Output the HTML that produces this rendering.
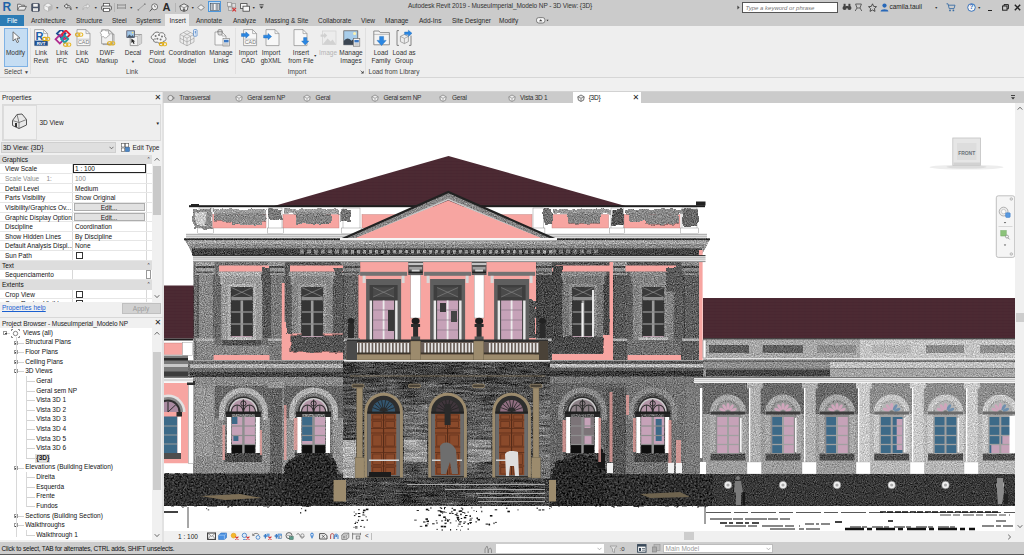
<!DOCTYPE html>
<html>
<head>
<meta charset="utf-8">
<title>Autodesk Revit 2019 - MuseuImperial_Modelo NP - 3D View: {3D}</title>
<style>
html,body{margin:0;padding:0;}
body{width:1024px;height:555px;overflow:hidden;background:#f0f0f0;font-family:"Liberation Sans","DejaVu Sans",sans-serif;font-size:6.5px;color:#222;position:relative;}
.abs{position:absolute;}
.t{position:absolute;white-space:nowrap;line-height:8px;}
.c{text-align:center;transform:translateX(-50%);}
#titlebar{left:0;top:0;width:1024px;height:26px;background:#cbcbcb;}
#ribbon{left:0;top:26px;width:1024px;height:51px;background:#eeeeee;border-bottom:1px solid #d6d6d6;}
#optbar{left:0;top:78px;width:1024px;height:13px;background:#f0f0f0;border-bottom:1px solid #d2d2d2;}
.tab{top:16.8px;color:#2a2a2a;}
.rl{top:48.5px;color:#333;line-height:8px;}
.pl{top:67.5px;color:#444;}
.sep{position:absolute;top:28px;width:1px;height:46px;background:#e0e0e0;}
#left{left:0;top:92px;width:163px;height:450px;background:#f0f0f0;}
.row{position:absolute;left:0;width:152px;height:9.63px;background:#fff;border-bottom:1px solid #e6e6e6;box-sizing:border-box;}
.row .k{position:absolute;left:5px;top:1px;line-height:8px;white-space:nowrap;color:#111;width:67px;overflow:hidden;}
.row .v{position:absolute;left:75px;top:1px;line-height:8px;white-space:nowrap;color:#111;}
.row .d{position:absolute;left:72px;top:0;width:1px;height:100%;background:#d8d8d8;}
.row .e{position:absolute;left:145.5px;top:0;width:1px;height:100%;background:#d8d8d8;}
.hdr{position:absolute;left:0;width:152px;height:9.63px;background:#dddddd;box-sizing:border-box;}
.hdr span{position:absolute;left:2px;top:1px;line-height:8px;color:#111;}
.hdr i{position:absolute;left:146.5px;top:0.5px;font-style:normal;font-size:5px;line-height:8px;color:#222;}
.btn{position:absolute;left:73.5px;top:0.5px;width:71px;height:7.6px;background:#e1e1e1;border:0.5px solid #adadad;box-sizing:border-box;text-align:center;line-height:7px;}
.chk{position:absolute;left:75.5px;top:1px;width:7px;height:7px;border:0.6px solid #333;background:#fff;box-sizing:border-box;}
.tree{position:absolute;white-space:nowrap;line-height:8px;color:#111;}
.ex{position:absolute;width:4px;height:4px;border:0.5px solid #999;background:#fff;box-sizing:border-box;}
.ex:after{content:"";position:absolute;left:0.5px;top:1.25px;width:2px;height:0.5px;background:#444;}
#vp{left:164px;top:103px;width:851px;height:428px;background:#fff;overflow:hidden;}
#tabs{left:163px;top:92px;width:861px;height:11px;background:#cbcbcb;}
.vt{position:absolute;top:94px;color:#333;white-space:nowrap;line-height:8px;letter-spacing:-0.25px;}
#status{left:0;top:541.5px;width:1024px;height:13.5px;background:#cdcdcd;}
#vcb{left:164px;top:531px;width:860px;height:10.5px;background:#f0f0f0;}
.ico{position:absolute;}
</style>
</head>
<body>
<!-- TITLE BAR + TABS -->
<div id="titlebar" class="abs"></div>
<div class="t" style="left:408px;top:1.7px;color:#333;letter-spacing:-0.1px;">Autodesk Revit 2019 - MuseuImperial_Modelo NP - 3D View: {3D}</div>
<div class="abs" style="left:0;top:15px;width:24px;height:11px;background:#2c7cb5;"></div>
<div class="t tab" style="left:7px;color:#fff;">File</div>
<div class="abs" style="left:165px;top:14px;width:24px;height:12px;background:#eeeeee;"></div>
<div class="t tab" style="left:31px;">Architecture</div>
<div class="t tab" style="left:76px;">Structure</div>
<div class="t tab" style="left:112px;">Steel</div>
<div class="t tab" style="left:136px;">Systems</div>
<div class="t tab" style="left:169.5px;">Insert</div>
<div class="t tab" style="left:196px;">Annotate</div>
<div class="t tab" style="left:233px;">Analyze</div>
<div class="t tab" style="left:265px;">Massing &amp; Site</div>
<div class="t tab" style="left:318px;">Collaborate</div>
<div class="t tab" style="left:361px;">View</div>
<div class="t tab" style="left:385px;">Manage</div>
<div class="t tab" style="left:419px;">Add-Ins</div>
<div class="t tab" style="left:452px;">Site Designer</div>
<div class="t tab" style="left:499px;">Modify</div>
<!-- RIBBON -->
<div id="ribbon" class="abs"></div>
<div id="optbar" class="abs"></div>
<div class="abs" style="left:4px;top:28px;width:22px;height:37px;background:#c5ddf3;border:1px solid #7fb2e5;box-sizing:content-box;"></div>
<div class="t rl c" style="left:15.5px;">Modify</div>
<div class="t rl c" style="left:41px;">Link<br>Revit</div>
<div class="t rl c" style="left:62px;">Link<br>IFC</div>
<div class="t rl c" style="left:82px;">Link<br>CAD</div>
<div class="t rl c" style="left:107px;">DWF<br>Markup</div>
<div class="t rl c" style="left:133px;">Decal<br><span style="font-size:4px">&#9660;</span></div>
<div class="t rl c" style="left:157px;">Point<br>Cloud</div>
<div class="t rl c" style="left:187px;">Coordination<br>Model</div>
<div class="t rl c" style="left:221px;">Manage<br>Links</div>
<div class="t rl c" style="left:248px;">Import<br>CAD</div>
<div class="t rl c" style="left:271px;">Import<br>gbXML</div>
<div class="t rl c" style="left:301px;">Insert<br>from File</div>
<div class="t rl c" style="left:328px;color:#b4b4b4;">Image</div>
<div class="t rl c" style="left:351px;">Manage<br>Images</div>
<div class="t rl c" style="left:381px;">Load<br>Family</div>
<div class="t rl c" style="left:404px;">Load as<br>Group</div>
<div class="t pl" style="left:4px;">Select <span style="font-size:5px">&#9660;</span></div>
<div class="t pl c" style="left:132px;">Link</div>
<div class="t pl c" style="left:297px;">Import</div>
<div class="t pl c" style="left:394px;">Load from Library</div>
<div class="sep" style="left:30px;"></div>
<div class="sep" style="left:235px;"></div>
<div class="sep" style="left:365px;"></div>

<div class="t" style="left:2.5px;top:1px;font-size:12px;line-height:12px;font-weight:bold;color:#1f63a8;">R</div>
<svg class="ico" style="left:17.0px;top:3.0px" width="10" height="8" viewBox="0 0 10 8"><path d="M0.6 7.2 V1.2 H3.4 L4.2 2.2 H7.4 V3.4" fill="#f4f4f4" stroke="#555" stroke-width="0.8"/><path d="M0.6 7.2 L2.4 3.4 H9.4 L7.6 7.2 Z" fill="#e8e8e8" stroke="#555" stroke-width="0.8"/></svg>
<svg class="ico" style="left:31.0px;top:2.5px" width="9" height="9" viewBox="0 0 9 9"><rect x="0.6" y="0.6" width="7.8" height="7.8" rx="0.8" fill="#4a5568" stroke="#3a4252" stroke-width="0.6"/><rect x="2.2" y="0.9" width="4.6" height="2.8" fill="#f0f0f0"/><rect x="2" y="5.2" width="5" height="3" fill="#e4e4e4"/></svg>
<svg class="ico" style="left:43.0px;top:2.0px" width="10" height="10" viewBox="0 0 10 10"><path d="M1 3.2 L5 1 L9 3.2 V7.4 L5 9.4 L1 7.4 Z" fill="#f2f2f2" stroke="#aaa" stroke-width="0.7"/><path d="M5 5.2 L9 3.2 V7.4 L5 9.4 Z" fill="#b8b8b8"/><path d="M1 3.2 L5 5.2 L9 3.2" fill="none" stroke="#aaa" stroke-width="0.6"/></svg>
<div class="t" style="left:55.5px;top:6.2px;font-size:3.5px;line-height:4px;color:#333;">&#9660;</div>
<svg class="ico" style="left:62.5px;top:3.0px" width="9" height="8" viewBox="0 0 9 8"><path d="M1 3 L4 0.8 V2.2 C7 2.2 8.4 4 8 6.8 C7.4 5 6.4 4 4 4 V5.4 Z" fill="#f0f0f0" stroke="#444" stroke-width="0.8" stroke-linejoin="round"/></svg>
<div class="t" style="left:75.0px;top:6.2px;font-size:3.5px;line-height:4px;color:#333;">&#9660;</div>
<svg class="ico" style="left:81.5px;top:3.0px" width="9" height="8" viewBox="0 0 9 8"><path d="M8 3 L5 0.8 V2.2 C2 2.2 0.6 4 1 6.8 C1.6 5 2.6 4 5 4 V5.4 Z" fill="#ececec" stroke="#b0b0b0" stroke-width="0.8" stroke-linejoin="round"/></svg>
<div class="t" style="left:94.0px;top:6.2px;font-size:3.5px;line-height:4px;color:#333;">&#9660;</div>
<svg class="ico" style="left:100.5px;top:2.5px" width="11" height="9" viewBox="0 0 11 9"><rect x="2.6" y="0.6" width="5.8" height="3" fill="#fff" stroke="#444" stroke-width="0.7"/><rect x="0.6" y="3" width="9.8" height="4" rx="1" fill="#e0e0e0" stroke="#444" stroke-width="0.8"/><rect x="2.6" y="5.6" width="5.8" height="2.8" fill="#fff" stroke="#444" stroke-width="0.7"/></svg>
<div class="abs" style="left:114px;top:2.5px;width:1px;height:9px;background:#b4b4b4;"></div>
<svg class="ico" style="left:117.0px;top:4.0px" width="9" height="5" viewBox="0 0 9 5"><path d="M0.5 1 H8.5 M0.5 4 H8.5" stroke="#8a8a8a" stroke-width="1"/><path d="M0.5 0 V5 M8.5 0 V5" stroke="#777" stroke-width="0.6"/></svg>
<div class="t" style="left:129.5px;top:6.2px;font-size:3.5px;line-height:4px;color:#333;">&#9660;</div>
<svg class="ico" style="left:136.5px;top:3.0px" width="9" height="8" viewBox="0 0 9 8"><path d="M1 7 L8 1" stroke="#9a9a9a" stroke-width="0.9"/><circle cx="1.3" cy="6.8" r="0.9" fill="#888"/><circle cx="7.8" cy="1.2" r="0.9" fill="#888"/></svg>
<svg class="ico" style="left:149.0px;top:2.5px" width="10" height="9" viewBox="0 0 10 9"><circle cx="5.6" cy="3.8" r="3" fill="#f0f0f0" stroke="#555" stroke-width="0.8"/><path d="M5.6 2 V3.8 H7" fill="none" stroke="#555" stroke-width="0.6"/><path d="M0.8 8.4 L3.4 5.4" stroke="#555" stroke-width="1"/></svg>
<div class="t" style="left:162.5px;top:1.5px;font-size:11px;line-height:11px;font-weight:bold;color:#2b2b2b;">A</div>
<div class="abs" style="left:175px;top:2.5px;width:1px;height:9px;background:#b4b4b4;"></div>
<svg class="ico" style="left:178.5px;top:2.5px" width="10" height="9" viewBox="0 0 10 9"><path d="M0.8 3 L5 0.8 L9.2 3 L8.2 7.2 L5 8.4 L1.8 7.2 Z" fill="#f0f0f0" stroke="#444" stroke-width="0.8"/><path d="M0.8 3 L5 4.6 L9.2 3 M5 4.6 V8.4" fill="none" stroke="#555" stroke-width="0.6"/><rect x="3.8" y="5.6" width="2.4" height="2.6" fill="#666"/></svg>
<div class="t" style="left:191.0px;top:6.2px;font-size:3.5px;line-height:4px;color:#333;">&#9660;</div>
<svg class="ico" style="left:196.5px;top:3.5px" width="8" height="7" viewBox="0 0 8 7"><path d="M0.6 3.5 L4 0.7 L7.4 3.5 L4 6.3 Z" fill="#f0f0f0" stroke="#666" stroke-width="0.7"/></svg>
<div class="abs" style="left:208px;top:1px;width:13px;height:11px;background:#c3dcf2;border:0.8px solid #4e97dc;box-sizing:border-box;"></div>
<svg class="ico" style="left:209.5px;top:2.5px" width="10" height="8" viewBox="0 0 10 8"><rect x="0.4" y="0.4" width="9.2" height="7.2" fill="#f6f6f6" stroke="#345" stroke-width="0.6"/><path d="M1.4 2 H4 M1.4 4 H4 M1.4 6 H4 M5.6 2 H8.6 M5.6 4 H8.6 M5.6 6 H8.6" stroke="#345" stroke-width="0.9"/></svg>
<svg class="ico" style="left:227.0px;top:2.0px" width="10" height="10" viewBox="0 0 10 10"><rect x="0.6" y="0.6" width="3.6" height="3.6" fill="#eee" stroke="#888" stroke-width="0.6"/><rect x="5" y="1.6" width="3.6" height="3.6" fill="#ddd" stroke="#888" stroke-width="0.6"/><rect x="1.4" y="5" width="3.6" height="3.6" fill="#ddd" stroke="#888" stroke-width="0.6"/><path d="M5.4 5.8 L9 9.4 M9 5.8 L5.4 9.4" stroke="#d32f2f" stroke-width="1.1"/></svg>
<svg class="ico" style="left:240.0px;top:2.5px" width="10" height="9" viewBox="0 0 10 9"><rect x="0.6" y="0.6" width="6.4" height="5" fill="#f4f4f4" stroke="#444" stroke-width="0.8"/><rect x="3" y="3.2" width="6.4" height="5" fill="#f4f4f4" stroke="#444" stroke-width="0.8"/></svg>
<div class="t" style="left:252.0px;top:6.2px;font-size:3.5px;line-height:4px;color:#333;">&#9660;</div>
<svg class="ico" style="left:258.5px;top:4.0px" width="5" height="6" viewBox="0 0 5 6"><path d="M0.4 0.8 H4.6" stroke="#333" stroke-width="0.9"/><path d="M0.6 2.6 H4.4 L2.5 4.8 Z" fill="#333"/></svg>
<svg class="ico" style="left:536.0px;top:16.5px" width="13" height="7" viewBox="0 0 13 7"><rect x="0.5" y="0.6" width="8.4" height="5.4" rx="2.2" fill="#f4f4f4" stroke="#555" stroke-width="0.7"/><path d="M3 4.2 L4.7 2.2 L6.4 4.2 Z" fill="#444"/><path d="M10.4 2.8 H12.6 L11.5 4.2 Z" fill="#333"/></svg>
<svg class="ico" style="left:736.5px;top:5.0px" width="3" height="5" viewBox="0 0 3 5"><path d="M0.4 0.4 L2.6 2.5 L0.4 4.6 Z" fill="#444"/></svg>
<div class="abs" style="left:742px;top:2px;width:95.5px;height:10.5px;background:#fff;border:0.8px solid #555;box-sizing:border-box;"></div>
<div class="t" style="left:745.5px;top:3.5px;font-size:6px;font-style:italic;color:#777;">Type a keyword or phrase</div>
<svg class="ico" style="left:842.0px;top:3.0px" width="10" height="8" viewBox="0 0 10 8"><circle cx="2.6" cy="5" r="2.1" fill="#444"/><circle cx="7.4" cy="5" r="2.1" fill="#444"/><rect x="1.6" y="0.8" width="2" height="3.6" fill="#444"/><rect x="6.4" y="0.8" width="2" height="3.6" fill="#444"/><rect x="4" y="3" width="2" height="2" fill="#444"/></svg>
<svg class="ico" style="left:854.0px;top:2.5px" width="9" height="9" viewBox="0 0 9 9"><path d="M1.2 8 L3 5 L1.6 1 H7.4 L6 5 L7.8 8" fill="none" stroke="#444" stroke-width="0.8"/><path d="M3 5 H6" stroke="#444" stroke-width="0.7"/></svg>
<svg class="ico" style="left:867.5px;top:2.5px" width="9" height="9" viewBox="0 0 9 9"><path d="M4.5 0.8 L5.7 3.4 L8.5 3.7 L6.4 5.6 L7 8.4 L4.5 7 L2 8.4 L2.6 5.6 L0.5 3.7 L3.3 3.4 Z" fill="none" stroke="#333" stroke-width="0.8"/></svg>
<svg class="ico" style="left:879.5px;top:2.5px" width="9" height="9" viewBox="0 0 9 9"><circle cx="4.5" cy="2.6" r="2.1" fill="#2868b8"/><path d="M0.6 8.6 C0.6 5.4 8.4 5.4 8.4 8.6 Z" fill="#2868b8"/></svg>
<div class="t" style="left:889.5px;top:3px;color:#222;">camila.tauil</div>
<div class="t" style="left:934.5px;top:5.5px;font-size:3.5px;line-height:4px;color:#333;">&#9660;</div>
<svg class="ico" style="left:945.5px;top:3.0px" width="10" height="9" viewBox="0 0 10 9"><path d="M0.5 0.8 H2 L3.2 5.6 H8 L9 2.2 H2.4" fill="none" stroke="#3b6ea5" stroke-width="0.9"/><circle cx="4" cy="7.4" r="0.9" fill="#3b6ea5"/><circle cx="7.4" cy="7.4" r="0.9" fill="#3b6ea5"/></svg>
<svg class="ico" style="left:966.5px;top:2.5px" width="9" height="9" viewBox="0 0 9 9"><circle cx="4.5" cy="4.5" r="3.8" fill="#f4f4f4" stroke="#2868b8" stroke-width="0.9"/></svg>
<div class="t" style="left:969.4px;top:3px;font-size:6.5px;font-weight:bold;color:#2868b8;">?</div>
<div class="t" style="left:977.5px;top:5.5px;font-size:3.5px;line-height:4px;color:#333;">&#9660;</div>
<div class="abs" style="left:988px;top:9.5px;width:4px;height:1.3px;background:#222;"></div>
<svg class="ico" style="left:1002.0px;top:3.5px" width="7" height="7" viewBox="0 0 7 7"><rect x="0.6" y="2" width="4.4" height="4.2" fill="none" stroke="#222" stroke-width="1"/><path d="M2 2 V0.6 H6.4 V4.8 H5" fill="none" stroke="#222" stroke-width="1"/></svg>
<svg class="ico" style="left:1014.0px;top:3.5px" width="7" height="7" viewBox="0 0 7 7"><path d="M0.8 0.8 L6.2 6.2 M6.2 0.8 L0.8 6.2" stroke="#222" stroke-width="1.4"/></svg>
<svg class="ico" style="left:11.5px;top:31.0px" width="9" height="13" viewBox="0 0 9 13"><path d="M1 0.8 V10 L3.4 7.8 L5 11.6 L6.6 10.9 L5 7.2 H8 Z" fill="#fafafa" stroke="#555" stroke-width="0.8" stroke-linejoin="round"/></svg>
<svg class="ico" style="left:33.5px;top:29.0px" width="18" height="18" viewBox="0 0 18 18"><path d="M0.6 0.6 H9.6 L13.6 4.6 V16.6 H0.6 Z" fill="#f7f7f7" stroke="#8a8a8a" stroke-width="0.7"/><path d="M9.6 0.6 V4.6 H13.6" fill="none" stroke="#8a8a8a" stroke-width="0.6"/><rect x="0.6" y="11.6" width="13" height="5" fill="#1d4f91"/><text x="7.1" y="15.8" font-size="4.4" font-family="Liberation Sans,sans-serif" font-weight="bold" fill="#fff" text-anchor="middle">RVT</text><text x="5.4" y="10.6" font-size="11" font-family="Liberation Sans,sans-serif" font-weight="bold" fill="#1d5fa8" text-anchor="middle">R</text><g transform="translate(8.6 8.4)"><rect x="0" y="0" width="4.2" height="3.2" rx="1.5" fill="none" stroke="#d9a514" stroke-width="1.1"/><rect x="3" y="0" width="4.2" height="3.2" rx="1.5" fill="none" stroke="#e8b92a" stroke-width="1.1"/></g></svg>
<svg class="ico" style="left:53.5px;top:29.5px" width="18" height="17" viewBox="0 0 18 17"><g fill="none" stroke-width="1.8"><rect x="4.2" y="0.6" width="6" height="6" transform="rotate(45 7.2 3.6)" stroke="#1d4f91"/><rect x="8.8" y="1.6" width="6" height="6" transform="rotate(45 11.8 4.6)" stroke="#e0233a"/><rect x="2.8" y="6.2" width="6" height="6" transform="rotate(45 5.8 9.2)" stroke="#b02a8f"/><rect x="8.2" y="6.6" width="5" height="5" transform="rotate(45 10.7 9.1)" stroke="#1f9aa8"/></g><g transform="translate(9.6 13)"><rect x="0" y="0" width="4.2" height="3.2" rx="1.5" fill="none" stroke="#d9a514" stroke-width="1.1"/><rect x="3" y="0" width="4.2" height="3.2" rx="1.5" fill="none" stroke="#e8b92a" stroke-width="1.1"/></g></svg>
<svg class="ico" style="left:74.5px;top:29.0px" width="17" height="18" viewBox="0 0 17 18"><path d="M2 0.6 H11 L15 4.6 V16.6 H2 Z" fill="#f7f7f7" stroke="#8a8a8a" stroke-width="0.7"/><path d="M11 0.6 V4.6 H15" fill="none" stroke="#8a8a8a" stroke-width="0.6"/><text x="8.6" y="15" font-size="5.4" font-family="Liberation Sans,sans-serif" fill="#777" text-anchor="middle">CAD</text><path d="M2.8 10.2 H14.4" stroke="#999" stroke-width="0.5"/><g transform="translate(0.6 4)"><rect x="0" y="0" width="4.2" height="3.2" rx="1.5" fill="none" stroke="#d9a514" stroke-width="1.1"/><rect x="3" y="0" width="4.2" height="3.2" rx="1.5" fill="none" stroke="#e8b92a" stroke-width="1.1"/></g></svg>
<svg class="ico" style="left:98.5px;top:29.0px" width="18" height="18" viewBox="0 0 18 18"><path d="M4 1.6 H11 L15 5.6 V15.6 H4 Z" fill="#e6e6e6" stroke="#8a8a8a" stroke-width="0.7"/><path d="M11 1.6 V5.6 H15" fill="none" stroke="#8a8a8a" stroke-width="0.6"/><path d="M2.6 0.8 H9.6 L13.6 4.8 V14.8 H2.6 Z" fill="#f0f0f0" stroke="#8a8a8a" stroke-width="0.7"/><path d="M9.6 0.8 V4.8 H13.6" fill="none" stroke="#8a8a8a" stroke-width="0.6"/><path d="M2.6 5.2 C0.8 5 0.8 2.2 3 2.4 C3.4 0.4 6.4 0.4 6.8 2 C8.6 0.8 10.4 2.6 9.4 4.2 C11 5 10.4 7.4 8.6 7.2 C8.2 9.4 5 9.4 4.6 7.6 C2.6 8.2 1.2 6.4 2.6 5.2 Z" fill="#fff" stroke="#999" stroke-width="0.8"/><g transform="translate(8.6 12.8)"><rect x="0" y="0" width="4.2" height="3.2" rx="1.5" fill="none" stroke="#d9a514" stroke-width="1.1"/><rect x="3" y="0" width="4.2" height="3.2" rx="1.5" fill="none" stroke="#e8b92a" stroke-width="1.1"/></g></svg>
<svg class="ico" style="left:125.5px;top:29.5px" width="17" height="17" viewBox="0 0 17 17"><path d="M4.2 6.4 L8.4 4.6 H15.6 V13.2 L11.6 15.6 H4.2 Z" fill="#f2f2f2" stroke="#777" stroke-width="0.7"/><path d="M4.2 6.4 H11.6 V15.6 M11.6 6.4 L15.6 4.6" fill="none" stroke="#888" stroke-width="0.6"/><path d="M11.6 6.4 L15.6 4.6 V13.2 L11.6 15.6 Z" fill="#d4d4d4"/><rect x="0.8" y="0.8" width="7.6" height="6.8" fill="#9fc4e6" stroke="#445" stroke-width="0.7"/><path d="M0.8 7.6 L3.4 4.4 L5.4 6.2 L6.6 5 L8.4 7.6 Z" fill="#4a5a6a"/><circle cx="6.6" cy="2.6" r="0.9" fill="#f4e07a"/><path d="M5.4 8.6 V13 L6.6 12 L7.6 14 L8.6 13.6 L7.6 11.6 H9.2 Z" fill="#222"/></svg>
<svg class="ico" style="left:149.5px;top:30.5px" width="18" height="16" viewBox="0 0 18 16"><path d="M3.6 8.6 C0.6 8.4 0.4 4.4 3.4 3.8 C3.8 1 8 0.2 9.6 2.2 C12.4 0.6 15.8 3 14.6 5.6 C17 6.8 16.2 10.4 13.4 10.2 C12.6 12.8 8.4 13 7.4 11 C5.4 12 3 10.8 3.6 8.6 Z" fill="#f4f4f4" stroke="#555" stroke-width="0.8"/><g fill="#777"><circle cx="5.6" cy="5" r="1"/><circle cx="9" cy="4" r="1"/><circle cx="12" cy="5.6" r="1"/><circle cx="7.4" cy="7.8" r="1"/><circle cx="10.6" cy="8.4" r="1"/><circle cx="5" cy="8" r="0.8"/></g><g transform="translate(9.4 11.6)"><rect x="0" y="0" width="4.2" height="3.2" rx="1.5" fill="none" stroke="#d9a514" stroke-width="1.1"/><rect x="3" y="0" width="4.2" height="3.2" rx="1.5" fill="none" stroke="#e8b92a" stroke-width="1.1"/></g></svg>
<svg class="ico" style="left:178.5px;top:29.0px" width="19" height="18" viewBox="0 0 19 18"><g fill="#ececec" stroke="#9a9a9a" stroke-width="0.6"><path d="M1 5.4 L8 1.6 L15 5.4 V13 L8 16.8 L1 13 Z"/><path d="M1 5.4 L8 9.2 L15 5.4 M8 9.2 V16.8 M1 9.2 L8 13 L15 9.2 M4.5 3.5 L11.5 7.3 V15 M11.5 3.5 L4.5 7.3 V15" fill="none"/></g><rect x="14.6" y="0.6" width="3.4" height="6.6" rx="0.8" fill="#fff" stroke="#3b78c4" stroke-width="0.7"/><path d="M16.3 1.8 V4.6 M16.3 5.6 V6.2" stroke="#3b78c4" stroke-width="0.9"/></svg>
<svg class="ico" style="left:212.5px;top:29.0px" width="18" height="18" viewBox="0 0 18 18"><path d="M2 3 H9 L13 7 V16 H2 Z" fill="#f7f7f7" stroke="#8a8a8a" stroke-width="0.7"/><path d="M9 3 V7 H13" fill="none" stroke="#8a8a8a" stroke-width="0.6"/><rect x="5" y="0.6" width="4" height="5.4" rx="1.2" fill="#d8d8d8" stroke="#777" stroke-width="0.7"/><path d="M4 2.6 H10" stroke="#777" stroke-width="0.6"/><rect x="10" y="9.4" width="6.6" height="7.6" fill="#f4f4f4" stroke="#777" stroke-width="0.6"/><rect x="11" y="10.8" width="4.6" height="2.6" fill="#3b78c4"/><path d="M11 14.8 H15.6 M11 16 H15.6" stroke="#888" stroke-width="0.5"/></svg>
<svg class="ico" style="left:240.5px;top:29.0px" width="17" height="18" viewBox="0 0 17 18"><path d="M2.6 0.6 H11.6 L15.6 4.6 V16.6 H2.6 Z" fill="#f7f7f7" stroke="#8a8a8a" stroke-width="0.7"/><path d="M11.6 0.6 V4.6 H15.6" fill="none" stroke="#8a8a8a" stroke-width="0.6"/><text x="9.4" y="15" font-size="5.4" font-family="Liberation Sans,sans-serif" fill="#777" text-anchor="middle">CAD</text><path d="M3.4 10.2 H15" stroke="#999" stroke-width="0.5"/><path d="M0.4 4.6 h4.4 v-1.8 l3.6 3.2 l-3.6 3.2 v-1.8 h-4.4 Z" fill="#2a86e2" stroke="#1a64b4" stroke-width="0.4"/></svg>
<svg class="ico" style="left:262.5px;top:29.0px" width="17" height="18" viewBox="0 0 17 18"><path d="M3 0.6 H12 L16 4.6 V16.6 H3 Z" fill="#f7f7f7" stroke="#8a8a8a" stroke-width="0.7"/><path d="M12 0.6 V4.6 H16" fill="none" stroke="#8a8a8a" stroke-width="0.6"/><path d="M0.6 6.2 h4.4 v-1.8 l3.6 3.2 l-3.6 3.2 v-1.8 h-4.4 Z" fill="#2a86e2" stroke="#1a64b4" stroke-width="0.4"/></svg>
<svg class="ico" style="left:292.5px;top:29.0px" width="18" height="18" viewBox="0 0 18 18"><path d="M1 0.6 H10 L14 4.6 V16.6 H1 Z" fill="#f7f7f7" stroke="#8a8a8a" stroke-width="0.7"/><path d="M10 0.6 V4.6 H14" fill="none" stroke="#8a8a8a" stroke-width="0.6"/><path d="M10.6 8.6 h3.2 v3.4 h2 l-3.6 4 l-3.6 -4 h2 Z" fill="#2a86e2" stroke="#1a64b4" stroke-width="0.4"/></svg>
<div class="t" style="left:313.5px;top:53.5px;font-size:3.5px;line-height:4px;color:#333;">&#9660;</div>
<svg class="ico" style="left:320.0px;top:30.0px" width="17" height="16" viewBox="0 0 17 16"><rect x="2.6" y="1" width="13.4" height="13.6" fill="#ececec" stroke="#d0d0d0" stroke-width="0.7"/><path d="M2.6 14.6 L7.6 8.4 L10.6 11.4 L12.6 9.6 L16 14.6 Z" fill="#d2d2d2"/><path d="M0.6 4.4 h3.6 v-1.6 l3 2.8 l-3 2.8 v-1.6 h-3.6 Z" fill="#d0d0d0"/></svg>
<svg class="ico" style="left:343.0px;top:30.0px" width="18" height="17" viewBox="0 0 18 17"><rect x="0.8" y="0.8" width="14" height="14" fill="#a8cdea" stroke="#555" stroke-width="0.7"/><path d="M0.8 14.8 V11 C3 7.6 6 7.6 8.4 10.8 L9.6 9.6 L14.8 14.8 Z" fill="#3c4652"/><circle cx="11.6" cy="3.6" r="1.5" fill="#fdf3b0"/><rect x="10.4" y="8.6" width="6.4" height="7.6" fill="#f4f4f4" stroke="#666" stroke-width="0.6"/><rect x="11.4" y="10" width="4.4" height="2.4" fill="#3b78c4"/><path d="M11.4 13.8 H15.8 M11.4 15 H15.8" stroke="#888" stroke-width="0.5"/></svg>
<svg class="ico" style="left:372.5px;top:30.0px" width="18" height="17" viewBox="0 0 18 17"><path d="M0.8 14.8 V1 H6 L7.2 2.6 H16.4 V14.8 Z" fill="#f4f4f4" stroke="#777" stroke-width="0.8"/><path d="M0.8 4.4 H16.4" stroke="#999" stroke-width="0.6"/><path d="M6.6 6.4 h4 v4 h2.6 l-4.6 5.2 l-4.6 -5.2 h2.6 Z" fill="#2a86e2" stroke="#1a64b4" stroke-width="0.4"/></svg>
<svg class="ico" style="left:395.5px;top:29.0px" width="18" height="18" viewBox="0 0 18 18"><path d="M3 1.6 H1 V16.4 H3 M13 16.4 H15 V6.6" fill="none" stroke="#777" stroke-width="0.9"/><path d="M4.4 7.4 L8.4 5.4 L12.4 7.4 V12.6 L8.4 14.6 L4.4 12.6 Z" fill="#ececec" stroke="#888" stroke-width="0.7"/><path d="M4.4 7.4 L8.4 9.4 L12.4 7.4 M8.4 9.4 V14.6" fill="none" stroke="#888" stroke-width="0.6"/><path d="M8.6 3 h3.8 v-1.8 l3.6 3.1 l-3.6 3.1 v-1.8 h-3.8 Z" fill="#2a86e2" stroke="#1a64b4" stroke-width="0.4"/></svg>
<svg class="ico" style="left:360.0px;top:70.0px" width="4" height="4" viewBox="0 0 4 4"><path d="M3.6 0.8 V3.6 H0.8 Z" fill="#444"/><path d="M0.6 0.6 L2.4 2.4" stroke="#444" stroke-width="0.7"/></svg>
<div id="left" class="abs"></div>
<div class="abs" style="left:162px;top:92px;width:2px;height:450px;background:#e2e2e2;"></div>
<div class="t" style="left:2px;top:94px;color:#222;">Properties</div>
<div class="t" style="left:154.5px;top:93.5px;font-size:8px;color:#222;">&#10005;</div>
<div class="abs" style="left:1.5px;top:103.5px;width:159.5px;height:37px;background:#eeeeee;border:0.5px solid #dadada;box-sizing:border-box;"></div>
<div class="abs" style="left:2.5px;top:104.5px;width:34.5px;height:35px;background:#f0f0f0;border:0.5px solid #dcdcdc;box-sizing:border-box;"></div>
<svg class="ico" style="left:11px;top:113px" width="17" height="17" viewBox="0 0 17 17"><path d="M1.5 7.5 L6 1.5 L11 1 L15.5 6.5 L15.5 12 L8 15.5 L1.5 12.5 Z" fill="#e8e8e8" stroke="#555" stroke-width="1"/><path d="M1.5 7.5 L8 9.5 L15.5 6.5 M8 9.5 L8 15.5 M6 1.5 L8 9.5" fill="none" stroke="#666" stroke-width="0.8"/><rect x="4" y="10" width="2" height="4" fill="#333"/></svg>
<div class="t" style="left:39.5px;top:119px;color:#222;">3D View</div>
<div class="t" style="left:155.5px;top:119.5px;font-size:4.5px;color:#222;">&#9660;</div>
<div class="abs" style="left:1px;top:142px;width:115px;height:11px;background:#dfdfdf;border:0.5px solid #cfcfcf;box-sizing:border-box;"></div>
<div class="t" style="left:3px;top:144px;color:#111;">3D View: {3D}</div>
<svg class="ico" style="left:109px;top:146px" width="5" height="4" viewBox="0 0 5 4"><path d="M0.5 0.8 L2.5 2.8 L4.5 0.8" fill="none" stroke="#444" stroke-width="0.7"/></svg>
<svg class="ico" style="left:121px;top:142.5px" width="9" height="9" viewBox="0 0 9 9"><rect x="0.5" y="0.5" width="3.2" height="3.5" fill="#fff" stroke="#555" stroke-width="0.6"/><rect x="4.5" y="0.5" width="3.2" height="3.5" fill="#fff" stroke="#555" stroke-width="0.6"/><rect x="0.5" y="5" width="3.2" height="3.5" fill="#fff" stroke="#555" stroke-width="0.6"/><rect x="4.5" y="4.5" width="3.8" height="4" fill="#4a86c6" stroke="#2b5c94" stroke-width="0.6"/></svg>
<div class="t" style="left:132.5px;top:143.5px;color:#222;">Edit Type</div>
<div class="abs" style="left:0;top:154.80px;width:163px;height:146.80px;overflow:hidden;">
<div class="hdr" style="top:0.00px"><span>Graphics</span><i>&#8963;</i></div>
<div class="row" style="top:9.63px"><div class="k">View Scale</div><div class="d"></div><div class="e"></div><div class="abs" style="left:73px;top:0;width:72.5px;height:9px;border:0.8px solid #222;box-sizing:border-box;background:#fff;"></div><div class="v">1 : 100</div></div>
<div class="row" style="top:19.26px"><div class="k" style="color:#8a8a8a">Scale Value&nbsp;&nbsp;&nbsp;&nbsp;1:</div><div class="d"></div><div class="e"></div><div class="v" style="color:#8a8a8a">100</div></div>
<div class="row" style="top:28.89px"><div class="k">Detail Level</div><div class="d"></div><div class="e"></div><div class="v">Medium</div></div>
<div class="row" style="top:38.52px"><div class="k">Parts Visibility</div><div class="d"></div><div class="e"></div><div class="v">Show Original</div></div>
<div class="row" style="top:48.15px"><div class="k">Visibility/Graphics Ov...</div><div class="d"></div><div class="e"></div><div class="btn">Edit...</div></div>
<div class="row" style="top:57.78px"><div class="k">Graphic Display Options</div><div class="d"></div><div class="e"></div><div class="btn">Edit...</div></div>
<div class="row" style="top:67.41px"><div class="k">Discipline</div><div class="d"></div><div class="e"></div><div class="v">Coordination</div></div>
<div class="row" style="top:77.04px"><div class="k">Show Hidden Lines</div><div class="d"></div><div class="e"></div><div class="v">By Discipline</div></div>
<div class="row" style="top:86.67px"><div class="k">Default Analysis Displ...</div><div class="d"></div><div class="e"></div><div class="v">None</div></div>
<div class="row" style="top:96.30px"><div class="k">Sun Path</div><div class="d"></div><div class="e"></div><div class="chk"></div></div>
<div class="hdr" style="top:105.93px"><span>Text</span><i>&#8963;</i></div>
<div class="row" style="top:115.56px"><div class="k">Sequenciamento</div><div class="d"></div><div class="e"></div><div class="v"></div></div>
<div class="hdr" style="top:125.19px"><span>Extents</span><i>&#8963;</i></div>
<div class="row" style="top:134.82px"><div class="k">Crop View</div><div class="d"></div><div class="e"></div><div class="chk"></div></div>
<div class="row" style="top:144.45px"><div class="k">Crop Region Visible</div><div class="d"></div><div class="e"></div><div class="chk"></div></div>
</div>
<div class="abs" style="left:152px;top:154.8px;width:9.5px;height:147px;background:#f0f0f0;"></div>
<div class="abs" style="left:152.5px;top:165.5px;width:8.5px;height:49px;background:#c9c9c9;"></div>
<svg class="ico" style="left:154px;top:157px" width="6" height="5" viewBox="0 0 6 5"><path d="M0.7 3.6 L3 1.2 L5.3 3.6" fill="none" stroke="#444" stroke-width="0.8"/></svg>
<svg class="ico" style="left:154px;top:294px" width="6" height="5" viewBox="0 0 6 5"><path d="M0.7 1.2 L3 3.6 L5.3 1.2" fill="none" stroke="#444" stroke-width="0.8"/></svg>
<div class="abs" style="left:146px;top:270.3px;width:5px;height:9px;background:#fff;border:0.5px solid #999;box-sizing:border-box;"></div>
<div class="t" style="left:2px;top:304px;color:#1a5fd0;text-decoration:underline;">Properties help</div>
<div class="abs" style="left:121.5px;top:303px;width:39px;height:11px;background:#d2d2d2;border:0.5px solid #c0c0c0;box-sizing:border-box;"></div>
<div class="t c" style="left:141px;top:304.5px;color:#9a9a9a;">Apply</div>
<div class="abs" style="left:0;top:316.5px;width:163px;height:1px;background:#d8d8d8;"></div>
<div class="t" style="left:2px;top:319.5px;color:#222;letter-spacing:-0.1px;">Project Browser - MuseuImperial_Modelo NP</div>
<div class="t" style="left:154.5px;top:319px;font-size:8px;color:#222;">&#10005;</div>
<div class="abs" style="left:0;top:328px;width:152px;height:212px;background:#fff;"></div>
<div class="abs" style="left:152px;top:328px;width:9.5px;height:212px;background:#f0f0f0;"></div>
<div class="abs" style="left:152.5px;top:352px;width:8.5px;height:138px;background:#cdcdcd;"></div>
<svg class="ico" style="left:154px;top:331px" width="6" height="5" viewBox="0 0 6 5"><path d="M0.7 3.6 L3 1.2 L5.3 3.6" fill="none" stroke="#444" stroke-width="0.8"/></svg>
<svg class="ico" style="left:154px;top:533px" width="6" height="5" viewBox="0 0 6 5"><path d="M0.7 1.2 L3 3.6 L5.3 1.2" fill="none" stroke="#444" stroke-width="0.8"/></svg>
<div class="abs" style="left:0;top:328px;width:152px;height:212px;overflow:hidden;">
<div class="tree" style="left:23.0px;top:0.80px;">Views (all)</div>
<div class="ex" style="left:3.0px;top:3.00px"></div>
<div class="abs" style="left:7.0px;top:5.00px;width:3.0px;height:0.5px;background:#d2d2d2;"></div>
<div class="tree" style="left:25.2px;top:10.42px;">Structural Plans</div>
<div class="ex" style="left:13.5px;top:12.62px"><div class="abs" style="left:1.25px;top:0.5px;width:0.5px;height:2px;background:#444;"></div></div>
<div class="abs" style="left:17.5px;top:14.62px;width:6.2px;height:0.5px;background:#d2d2d2;"></div>
<div class="tree" style="left:25.2px;top:20.04px;">Floor Plans</div>
<div class="ex" style="left:13.5px;top:22.24px"><div class="abs" style="left:1.25px;top:0.5px;width:0.5px;height:2px;background:#444;"></div></div>
<div class="abs" style="left:17.5px;top:24.24px;width:6.2px;height:0.5px;background:#d2d2d2;"></div>
<div class="tree" style="left:25.2px;top:29.66px;">Ceiling Plans</div>
<div class="ex" style="left:13.5px;top:31.86px"><div class="abs" style="left:1.25px;top:0.5px;width:0.5px;height:2px;background:#444;"></div></div>
<div class="abs" style="left:17.5px;top:33.86px;width:6.2px;height:0.5px;background:#d2d2d2;"></div>
<div class="tree" style="left:25.2px;top:39.28px;">3D Views</div>
<div class="ex" style="left:13.5px;top:41.48px"></div>
<div class="abs" style="left:17.5px;top:43.48px;width:6.2px;height:0.5px;background:#d2d2d2;"></div>
<div class="tree" style="left:36.2px;top:48.90px;">Geral</div>
<div class="abs" style="left:26px;top:53.10px;width:8.5px;height:0.5px;background:#d2d2d2;"></div>
<div class="tree" style="left:36.2px;top:58.52px;">Geral sem NP</div>
<div class="abs" style="left:26px;top:62.72px;width:8.5px;height:0.5px;background:#d2d2d2;"></div>
<div class="tree" style="left:36.2px;top:68.14px;">Vista 3D 1</div>
<div class="abs" style="left:26px;top:72.34px;width:8.5px;height:0.5px;background:#d2d2d2;"></div>
<div class="tree" style="left:36.2px;top:77.76px;">Vista 3D 2</div>
<div class="abs" style="left:26px;top:81.96px;width:8.5px;height:0.5px;background:#d2d2d2;"></div>
<div class="tree" style="left:36.2px;top:87.38px;">Vista 3D 3</div>
<div class="abs" style="left:26px;top:91.58px;width:8.5px;height:0.5px;background:#d2d2d2;"></div>
<div class="tree" style="left:36.2px;top:97.00px;">Vista 3D 4</div>
<div class="abs" style="left:26px;top:101.20px;width:8.5px;height:0.5px;background:#d2d2d2;"></div>
<div class="tree" style="left:36.2px;top:106.62px;">Vista 3D 5</div>
<div class="abs" style="left:26px;top:110.82px;width:8.5px;height:0.5px;background:#d2d2d2;"></div>
<div class="tree" style="left:36.2px;top:116.24px;">Vista 3D 6</div>
<div class="abs" style="left:26px;top:120.44px;width:8.5px;height:0.5px;background:#d2d2d2;"></div>
<div class="abs" style="left:34.7px;top:125.56px;width:15px;height:9px;background:#dcdcdc;"></div>
<div class="tree" style="left:36.2px;top:125.86px;font-weight:bold;">{3D}</div>
<div class="abs" style="left:26px;top:130.06px;width:8.5px;height:0.5px;background:#d2d2d2;"></div>
<div class="tree" style="left:25.2px;top:135.48px;">Elevations (Building Elevation)</div>
<div class="ex" style="left:13.5px;top:137.68px"></div>
<div class="abs" style="left:17.5px;top:139.68px;width:6.2px;height:0.5px;background:#d2d2d2;"></div>
<div class="tree" style="left:36.2px;top:145.10px;">Direita</div>
<div class="abs" style="left:26px;top:149.30px;width:8.5px;height:0.5px;background:#d2d2d2;"></div>
<div class="tree" style="left:36.2px;top:154.72px;">Esquerda</div>
<div class="abs" style="left:26px;top:158.92px;width:8.5px;height:0.5px;background:#d2d2d2;"></div>
<div class="tree" style="left:36.2px;top:164.34px;">Frente</div>
<div class="abs" style="left:26px;top:168.54px;width:8.5px;height:0.5px;background:#d2d2d2;"></div>
<div class="tree" style="left:36.2px;top:173.96px;">Fundos</div>
<div class="abs" style="left:26px;top:178.16px;width:8.5px;height:0.5px;background:#d2d2d2;"></div>
<div class="tree" style="left:25.2px;top:183.58px;">Sections (Building Section)</div>
<div class="ex" style="left:13.5px;top:185.78px"><div class="abs" style="left:1.25px;top:0.5px;width:0.5px;height:2px;background:#444;"></div></div>
<div class="abs" style="left:17.5px;top:187.78px;width:6.2px;height:0.5px;background:#d2d2d2;"></div>
<div class="tree" style="left:25.2px;top:193.20px;">Walkthroughs</div>
<div class="ex" style="left:13.5px;top:195.40px"></div>
<div class="abs" style="left:17.5px;top:197.40px;width:6.2px;height:0.5px;background:#d2d2d2;"></div>
<div class="tree" style="left:36.2px;top:202.82px;">Walkthrough 1</div>
<div class="abs" style="left:26px;top:207.02px;width:8.5px;height:0.5px;background:#d2d2d2;"></div>
<div class="abs" style="left:15.5px;top:9px;width:0.5px;height:200px;background:#d8d8d8;"></div>
<div class="abs" style="left:26px;top:48px;width:0.5px;height:82px;background:#d8d8d8;"></div>
<div class="abs" style="left:26px;top:144px;width:0.5px;height:34.5px;background:#d8d8d8;"></div>
<div class="abs" style="left:26px;top:202px;width:0.5px;height:5px;background:#d8d8d8;"></div>
<svg class="ico" style="left:11px;top:1px" width="9" height="9" viewBox="0 0 9 9"><circle cx="4.5" cy="4.5" r="2.2" fill="none" stroke="#555" stroke-width="0.7"/><path d="M0.5 2 V0.5 H2 M7 0.5 H8.5 V2 M8.5 7 V8.5 H7 M2 8.5 H0.5 V7" fill="none" stroke="#555" stroke-width="0.7"/></svg>
</div>
<div id="tabs" class="abs"></div>
<div class="abs" style="left:572.5px;top:92px;width:68px;height:11px;background:#fff;"></div>
<svg class="ico" style="left:167px;top:93.5px" width="8" height="8" viewBox="0 0 8 8"><circle cx="3.5" cy="4" r="2.6" fill="#e4e4e4" stroke="#777" stroke-width="0.8"/><path d="M5.6 2.6 L7.4 4 L5.6 5.4" fill="none" stroke="#777" stroke-width="0.8"/></svg>
<div class="vt" style="left:179.3px;">Transversal</div>
<svg class="ico" style="left:234.5px;top:93.5px" width="8" height="8" viewBox="0 0 8 8"><path d="M0.8 2.8 L4 1 L7.2 2.8 L6.6 6.2 L4 7.4 L1.4 6.2 Z" fill="#eee" stroke="#888" stroke-width="0.8"/><path d="M0.8 2.8 L4 4.2 L7.2 2.8 M4 4.2 V7.4" fill="none" stroke="#888" stroke-width="0.6"/></svg>
<div class="vt" style="left:247.3px;">Geral sem NP</div>
<svg class="ico" style="left:302.5px;top:93.5px" width="8" height="8" viewBox="0 0 8 8"><path d="M0.8 2.8 L4 1 L7.2 2.8 L6.6 6.2 L4 7.4 L1.4 6.2 Z" fill="#eee" stroke="#888" stroke-width="0.8"/><path d="M0.8 2.8 L4 4.2 L7.2 2.8 M4 4.2 V7.4" fill="none" stroke="#888" stroke-width="0.6"/></svg>
<div class="vt" style="left:315.6px;">Geral</div>
<svg class="ico" style="left:371.0px;top:93.5px" width="8" height="8" viewBox="0 0 8 8"><path d="M0.8 2.8 L4 1 L7.2 2.8 L6.6 6.2 L4 7.4 L1.4 6.2 Z" fill="#eee" stroke="#888" stroke-width="0.8"/><path d="M0.8 2.8 L4 4.2 L7.2 2.8 M4 4.2 V7.4" fill="none" stroke="#888" stroke-width="0.6"/></svg>
<div class="vt" style="left:383.4px;">Geral sem NP</div>
<svg class="ico" style="left:439.0px;top:93.5px" width="8" height="8" viewBox="0 0 8 8"><path d="M0.8 2.8 L4 1 L7.2 2.8 L6.6 6.2 L4 7.4 L1.4 6.2 Z" fill="#eee" stroke="#888" stroke-width="0.8"/><path d="M0.8 2.8 L4 4.2 L7.2 2.8 M4 4.2 V7.4" fill="none" stroke="#888" stroke-width="0.6"/></svg>
<div class="vt" style="left:452.0px;">Geral</div>
<svg class="ico" style="left:508.0px;top:93.5px" width="8" height="8" viewBox="0 0 8 8"><path d="M0.8 2.8 L4 1 L7.2 2.8 L6.6 6.2 L4 7.4 L1.4 6.2 Z" fill="#eee" stroke="#888" stroke-width="0.8"/><path d="M0.8 2.8 L4 4.2 L7.2 2.8 M4 4.2 V7.4" fill="none" stroke="#888" stroke-width="0.6"/></svg>
<div class="vt" style="left:520.0px;">Vista 3D 1</div>
<svg class="ico" style="left:577.0px;top:93.5px" width="8" height="8" viewBox="0 0 8 8"><path d="M0.8 2.8 L4 1 L7.2 2.8 L6.6 6.2 L4 7.4 L1.4 6.2 Z" fill="#eee" stroke="#555" stroke-width="0.8"/><path d="M0.8 2.8 L4 4.2 L7.2 2.8 M4 4.2 V7.4" fill="none" stroke="#555" stroke-width="0.6"/></svg>
<div class="vt" style="left:588.7px;color:#111;">{3D}</div>
<div class="t" style="left:632.5px;top:93.5px;font-size:8px;color:#222;">&#10005;</div>
<svg class="ico" style="left:1010px;top:94px" width="6" height="7" viewBox="0 0 6 7"><path d="M1 1.5 H5" stroke="#333" stroke-width="0.9"/><path d="M1 3.2 H5 L3 5.6 Z" fill="#333"/></svg>
<div id="vp" class="abs">
<svg width="851" height="428" viewBox="164 103 851 428" style="position:absolute;left:0;top:0;" shape-rendering="auto">
<defs>
<filter id="nz" x="0" y="0" width="100%" height="100%" color-interpolation-filters="sRGB">
<feTurbulence type="fractalNoise" baseFrequency="0.9" numOctaves="2" seed="11" result="t"/>
<feColorMatrix in="t" type="matrix" values="0.5 0.5 0 0 0  0.5 0.5 0 0 0  0.5 0.5 0 0 0  0 0 0 0 1" result="g"/>
<feComposite in="SourceGraphic" in2="g" operator="arithmetic" k1="0" k2="1" k3="0.85" k4="-0.44" result="b"/>
<feComposite in="b" in2="SourceGraphic" operator="in"/>
</filter>
<filter id="nz2" x="-2%" y="-5%" width="104%" height="110%" color-interpolation-filters="sRGB">
<feTurbulence type="fractalNoise" baseFrequency="0.2" numOctaves="2" seed="5" result="d"/>
<feDisplacementMap in="SourceGraphic" in2="d" scale="6" xChannelSelector="R" yChannelSelector="G" result="s"/>
<feTurbulence type="fractalNoise" baseFrequency="0.55" numOctaves="3" seed="4" result="t"/>
<feColorMatrix in="t" type="matrix" values="0.5 0.5 0 0 0  0.5 0.5 0 0 0  0.5 0.5 0 0 0  0 0 0 0 1" result="g"/>
<feComposite in="s" in2="g" operator="arithmetic" k1="0" k2="1" k3="0.8" k4="-0.4" result="b"/>
<feComposite in="b" in2="s" operator="in"/>
</filter>
<filter id="nzs" x="0" y="0" width="100%" height="100%" color-interpolation-filters="sRGB">
<feTurbulence type="fractalNoise" baseFrequency="0.9" numOctaves="2" seed="31" result="t"/>
<feColorMatrix in="t" type="matrix" values="0.5 0.5 0 0 0  0.5 0.5 0 0 0  0.5 0.5 0 0 0  0 0 0 0 1" result="g"/>
<feComposite in="SourceGraphic" in2="g" operator="arithmetic" k1="0" k2="1" k3="0.7" k4="-0.35" result="b"/>
<feComposite in="b" in2="SourceGraphic" operator="in"/>
</filter>
<filter id="nzh" x="0" y="0" width="100%" height="100%" color-interpolation-filters="sRGB">
<feTurbulence type="fractalNoise" baseFrequency="0.9" numOctaves="2" seed="17"/>
<feColorMatrix type="matrix" values="0.5 0.5 0 0 0  0.5 0.5 0 0 0  0.5 0.5 0 0 0  0 0 0 0 1" result="t"/>
<feTurbulence type="fractalNoise" baseFrequency="0.05 0.4" numOctaves="3" seed="3"/>
<feColorMatrix type="matrix" values="0.5 0.5 0 0 0  0.5 0.5 0 0 0  0.5 0.5 0 0 0  0 0 0 0 1" result="h"/>
<feComposite in="t" in2="h" operator="arithmetic" k1="0" k2="0.7" k3="0.5" k4="-0.1" result="g"/>
<feComposite in="SourceGraphic" in2="g" operator="arithmetic" k1="0" k2="1" k3="1.3" k4="-0.65" result="b"/>
<feComposite in="b" in2="SourceGraphic" operator="in"/>
</filter>
<filter id="nzr" x="-2%" y="-2%" width="104%" height="104%" color-interpolation-filters="sRGB">
<feTurbulence type="fractalNoise" baseFrequency="0.12" numOctaves="2" seed="9" result="d"/>
<feDisplacementMap in="SourceGraphic" in2="d" scale="5" xChannelSelector="R" yChannelSelector="G" result="s"/>
<feTurbulence type="fractalNoise" baseFrequency="0.9" numOctaves="2" seed="21" result="t"/>
<feColorMatrix in="t" type="matrix" values="0.5 0.5 0 0 0  0.5 0.5 0 0 0  0.5 0.5 0 0 0  0 0 0 0 1" result="g"/>
<feComposite in="s" in2="g" operator="arithmetic" k1="0" k2="1" k3="0.85" k4="-0.44" result="b"/>
<feComposite in="b" in2="s" operator="in"/>
</filter>
<pattern id="tile" width="6" height="3" patternUnits="userSpaceOnUse"><rect width="6" height="3" fill="#4c2a33"/><path d="M0 2.75 H6" stroke="#44232c" stroke-width="0.5"/><path d="M1 0 V3" stroke="#47262f" stroke-width="0.4"/></pattern>
</defs>
<g id="f0">
<polygon points="274.0,206.0 448.5,156.0 625.5,206.0" fill="url(#tile)"/>
<rect x="164.0" y="285.5" width="30.0" height="53.0" fill="url(#tile)"/>
<rect x="703.0" y="298.0" width="312.0" height="40.5" fill="url(#tile)"/>
<rect x="191.0" y="208.0" width="514.0" height="25.5" fill="#ffffff"/>
<rect x="212.7" y="214.5" width="53.3" height="13.5" fill="#f7a5a1" stroke="#b87a78" stroke-width="0.4"/>
<rect x="283.0" y="214.5" width="56.0" height="13.5" fill="#f7a5a1" stroke="#b87a78" stroke-width="0.4"/>
<rect x="362.0" y="214.5" width="170.0" height="13.5" fill="#f7a5a1" stroke="#b87a78" stroke-width="0.4"/>
<rect x="552.0" y="214.5" width="56.6" height="13.5" fill="#f7a5a1" stroke="#b87a78" stroke-width="0.4"/>
<rect x="624.0" y="214.5" width="56.0" height="13.5" fill="#f7a5a1" stroke="#b87a78" stroke-width="0.4"/>
<rect x="199.0" y="208.0" width="13.0" height="22.0" fill="#ffffff" stroke="#777" stroke-width="0.4"/>
<rect x="197.8" y="228.0" width="15.4" height="5.5" fill="#ffffff" stroke="#777" stroke-width="0.4"/>
<rect x="268.6" y="208.0" width="13.4" height="22.0" fill="#ffffff" stroke="#777" stroke-width="0.4"/>
<rect x="267.4" y="228.0" width="15.8" height="5.5" fill="#ffffff" stroke="#777" stroke-width="0.4"/>
<rect x="343.0" y="208.0" width="17.0" height="22.0" fill="#ffffff" stroke="#777" stroke-width="0.4"/>
<rect x="341.8" y="228.0" width="19.4" height="5.5" fill="#ffffff" stroke="#777" stroke-width="0.4"/>
<rect x="533.0" y="208.0" width="10.7" height="22.0" fill="#ffffff" stroke="#777" stroke-width="0.4"/>
<rect x="531.8" y="228.0" width="13.1" height="5.5" fill="#ffffff" stroke="#777" stroke-width="0.4"/>
<rect x="611.0" y="208.0" width="12.5" height="22.0" fill="#ffffff" stroke="#777" stroke-width="0.4"/>
<rect x="609.8" y="228.0" width="14.9" height="5.5" fill="#ffffff" stroke="#777" stroke-width="0.4"/>
<rect x="682.0" y="208.0" width="15.0" height="22.0" fill="#ffffff" stroke="#777" stroke-width="0.4"/>
<rect x="680.8" y="228.0" width="17.4" height="5.5" fill="#ffffff" stroke="#777" stroke-width="0.4"/>
<rect x="186.0" y="233.5" width="521.0" height="5.0" fill="#dcdcdc"/>
<path d="M186.0 234.5 L707.0 234.5" stroke="#8a8a8a" stroke-width="0.50" fill="none"/>
<path d="M186.0 236.5 L707.0 236.5" stroke="#a0a0a0" stroke-width="0.50" fill="none"/>
<rect x="358.0" y="262.0" width="178.0" height="98.0" fill="#f7a5a1"/>
<rect x="164.0" y="343.0" width="18.5" height="11.5" fill="#f7a5a1" stroke="#b87a78" stroke-width="0.4"/>
<rect x="182.5" y="342.5" width="10.0" height="13.0" fill="#ffffff" stroke="#888" stroke-width="0.4"/>
<rect x="164.0" y="383.0" width="24.5" height="80.5" fill="#f7a5a1"/>
<rect x="164.0" y="463.5" width="30.0" height="10.5" fill="#ffffff"/>
</g>
<g id="n1" filter="url(#nz)">
<polygon points="184.0,238.5 710.0,238.5 706.0,247.0 701.0,255.5 193.0,255.5 189.0,247.0" fill="#9a9a9a"/>
<rect x="184.0" y="238.5" width="526.0" height="1.8" fill="#2c2c2c"/>
<rect x="188.0" y="240.3" width="519.0" height="3.7" fill="#a8a8a8"/>
<rect x="190.0" y="244.0" width="515.0" height="4.3" fill="#8c8c8c"/>
<rect x="192.0" y="248.3" width="510.0" height="7.2" fill="#464646"/>
<rect x="345.0" y="250.0" width="3.0" height="3.5" fill="#a0a0a0"/>
<rect x="351.0" y="250.0" width="3.0" height="3.5" fill="#a0a0a0"/>
<rect x="357.0" y="250.0" width="3.0" height="3.5" fill="#a0a0a0"/>
<rect x="363.0" y="250.0" width="3.0" height="3.5" fill="#a0a0a0"/>
<rect x="369.0" y="250.0" width="3.0" height="3.5" fill="#a0a0a0"/>
<rect x="375.0" y="250.0" width="3.0" height="3.5" fill="#a0a0a0"/>
<rect x="381.0" y="250.0" width="3.0" height="3.5" fill="#a0a0a0"/>
<rect x="387.0" y="250.0" width="3.0" height="3.5" fill="#a0a0a0"/>
<rect x="393.0" y="250.0" width="3.0" height="3.5" fill="#a0a0a0"/>
<rect x="399.0" y="250.0" width="3.0" height="3.5" fill="#a0a0a0"/>
<rect x="405.0" y="250.0" width="3.0" height="3.5" fill="#a0a0a0"/>
<rect x="411.0" y="250.0" width="3.0" height="3.5" fill="#a0a0a0"/>
<rect x="417.0" y="250.0" width="3.0" height="3.5" fill="#a0a0a0"/>
<rect x="423.0" y="250.0" width="3.0" height="3.5" fill="#a0a0a0"/>
<rect x="429.0" y="250.0" width="3.0" height="3.5" fill="#a0a0a0"/>
<rect x="435.0" y="250.0" width="3.0" height="3.5" fill="#a0a0a0"/>
<rect x="441.0" y="250.0" width="3.0" height="3.5" fill="#a0a0a0"/>
<rect x="447.0" y="250.0" width="3.0" height="3.5" fill="#a0a0a0"/>
<rect x="453.0" y="250.0" width="3.0" height="3.5" fill="#a0a0a0"/>
<rect x="459.0" y="250.0" width="3.0" height="3.5" fill="#a0a0a0"/>
<rect x="465.0" y="250.0" width="3.0" height="3.5" fill="#a0a0a0"/>
<rect x="471.0" y="250.0" width="3.0" height="3.5" fill="#a0a0a0"/>
<rect x="477.0" y="250.0" width="3.0" height="3.5" fill="#a0a0a0"/>
<rect x="483.0" y="250.0" width="3.0" height="3.5" fill="#a0a0a0"/>
<rect x="489.0" y="250.0" width="3.0" height="3.5" fill="#a0a0a0"/>
<rect x="495.0" y="250.0" width="3.0" height="3.5" fill="#a0a0a0"/>
<rect x="501.0" y="250.0" width="3.0" height="3.5" fill="#a0a0a0"/>
<rect x="507.0" y="250.0" width="3.0" height="3.5" fill="#a0a0a0"/>
<rect x="513.0" y="250.0" width="3.0" height="3.5" fill="#a0a0a0"/>
<rect x="519.0" y="250.0" width="3.0" height="3.5" fill="#a0a0a0"/>
<rect x="525.0" y="250.0" width="3.0" height="3.5" fill="#a0a0a0"/>
<rect x="531.0" y="250.0" width="3.0" height="3.5" fill="#a0a0a0"/>
<rect x="537.0" y="250.0" width="3.0" height="3.5" fill="#a0a0a0"/>
<rect x="543.0" y="250.0" width="3.0" height="3.5" fill="#a0a0a0"/>
<rect x="549.0" y="250.0" width="3.0" height="3.5" fill="#a0a0a0"/>
<rect x="300.0" y="249.5" width="4.0" height="4.0" fill="#8a8a8a"/>
<rect x="307.0" y="249.5" width="4.0" height="4.0" fill="#8a8a8a"/>
<rect x="314.0" y="249.5" width="4.0" height="4.0" fill="#8a8a8a"/>
<rect x="321.0" y="249.5" width="4.0" height="4.0" fill="#8a8a8a"/>
<rect x="328.0" y="249.5" width="4.0" height="4.0" fill="#8a8a8a"/>
<rect x="335.0" y="249.5" width="4.0" height="4.0" fill="#8a8a8a"/>
<rect x="342.0" y="249.5" width="4.0" height="4.0" fill="#8a8a8a"/>
<rect x="552.0" y="249.5" width="4.0" height="4.0" fill="#808080"/>
<rect x="559.0" y="249.5" width="4.0" height="4.0" fill="#808080"/>
<rect x="566.0" y="249.5" width="4.0" height="4.0" fill="#808080"/>
<rect x="573.0" y="249.5" width="4.0" height="4.0" fill="#808080"/>
<rect x="580.0" y="249.5" width="4.0" height="4.0" fill="#808080"/>
<rect x="587.0" y="249.5" width="4.0" height="4.0" fill="#808080"/>
<rect x="594.0" y="249.5" width="4.0" height="4.0" fill="#808080"/>
<rect x="193.5" y="262.0" width="149.5" height="98.0" fill="#747474"/>
<rect x="213.0" y="275.0" width="9.0" height="63.0" fill="#6c6c6c"/>
<rect x="258.0" y="276.0" width="12.0" height="62.0" fill="#5a5a5a"/>
<rect x="213.6" y="345.0" width="55.9" height="10.5" fill="#8a8a8a"/>
<rect x="223.0" y="338.5" width="38.0" height="7.0" fill="#545454"/>
<rect x="284.6" y="262.0" width="58.4" height="98.0" fill="#5e5e5e"/>
<rect x="536.0" y="262.0" width="163.0" height="98.0" fill="#5a5a5a"/>
<rect x="550.0" y="272.0" width="12.0" height="66.0" fill="#4a4a4a"/>
<rect x="603.0" y="272.0" width="6.5" height="60.0" fill="#4a4a4a"/>
<rect x="625.5" y="272.0" width="57.5" height="66.0" fill="#606060"/>
<rect x="627.0" y="339.0" width="54.0" height="16.0" fill="#727272"/>
<rect x="197.4" y="275.0" width="15.3" height="65.0" fill="#8c8c8c"/>
<rect x="197.4" y="275.0" width="1.2" height="65.0" fill="#4a4a4a"/>
<rect x="195.6" y="262.0" width="18.9" height="13.0" fill="#a2a2a2"/>
<rect x="195.6" y="266.0" width="18.9" height="2.0" fill="#4c4c4c"/>
<rect x="196.4" y="271.5" width="17.3" height="1.5" fill="#555"/>
<rect x="196.4" y="338.5" width="17.3" height="21.0" fill="#8c8c8c"/>
<rect x="195.8" y="338.5" width="18.5" height="2.5" fill="#b4b4b4"/>
<rect x="269.5" y="275.0" width="13.5" height="65.0" fill="#7c7c7c"/>
<rect x="269.5" y="275.0" width="1.2" height="65.0" fill="#4a4a4a"/>
<rect x="267.7" y="262.0" width="17.1" height="13.0" fill="#9a9a9a"/>
<rect x="267.7" y="266.0" width="17.1" height="2.0" fill="#4c4c4c"/>
<rect x="268.5" y="271.5" width="15.5" height="1.5" fill="#555"/>
<rect x="268.5" y="338.5" width="15.5" height="21.0" fill="#7c7c7c"/>
<rect x="267.9" y="338.5" width="16.7" height="2.5" fill="#b4b4b4"/>
<rect x="343.0" y="275.0" width="15.4" height="65.0" fill="#666"/>
<rect x="343.0" y="275.0" width="1.2" height="65.0" fill="#4a4a4a"/>
<rect x="341.2" y="262.0" width="19.0" height="13.0" fill="#8a8a8a"/>
<rect x="341.2" y="266.0" width="19.0" height="2.0" fill="#4c4c4c"/>
<rect x="342.0" y="271.5" width="17.4" height="1.5" fill="#555"/>
<rect x="342.0" y="338.5" width="17.4" height="21.0" fill="#666"/>
<rect x="341.4" y="338.5" width="18.6" height="2.5" fill="#b4b4b4"/>
<rect x="535.6" y="275.0" width="14.4" height="65.0" fill="#484848"/>
<rect x="535.6" y="275.0" width="1.2" height="65.0" fill="#4a4a4a"/>
<rect x="533.8" y="262.0" width="18.0" height="13.0" fill="#858585"/>
<rect x="533.8" y="266.0" width="18.0" height="2.0" fill="#4c4c4c"/>
<rect x="534.6" y="271.5" width="16.4" height="1.5" fill="#555"/>
<rect x="534.6" y="338.5" width="16.4" height="21.0" fill="#484848"/>
<rect x="534.0" y="338.5" width="17.6" height="2.5" fill="#b4b4b4"/>
<rect x="613.0" y="275.0" width="12.5" height="65.0" fill="#5c5c5c"/>
<rect x="613.0" y="275.0" width="1.2" height="65.0" fill="#4a4a4a"/>
<rect x="611.2" y="262.0" width="16.1" height="13.0" fill="#969696"/>
<rect x="611.2" y="266.0" width="16.1" height="2.0" fill="#4c4c4c"/>
<rect x="612.0" y="271.5" width="14.5" height="1.5" fill="#555"/>
<rect x="612.0" y="338.5" width="14.5" height="21.0" fill="#5c5c5c"/>
<rect x="611.4" y="338.5" width="15.7" height="2.5" fill="#b4b4b4"/>
<rect x="683.5" y="275.0" width="14.0" height="65.0" fill="#626262"/>
<rect x="683.5" y="275.0" width="1.2" height="65.0" fill="#4a4a4a"/>
<rect x="681.7" y="262.0" width="17.6" height="13.0" fill="#8a8a8a"/>
<rect x="681.7" y="266.0" width="17.6" height="2.0" fill="#4c4c4c"/>
<rect x="682.5" y="271.5" width="16.0" height="1.5" fill="#555"/>
<rect x="682.5" y="338.5" width="16.0" height="21.0" fill="#626262"/>
<rect x="681.9" y="338.5" width="17.2" height="2.5" fill="#b4b4b4"/>
<rect x="218.3" y="271.5" width="47.0" height="4.5" fill="#b2b2b2"/>
<rect x="221.3" y="276.0" width="41.0" height="64.0" fill="#9e9e9e"/>
<rect x="220.3" y="276.0" width="3.0" height="8.0" fill="#b2b2b2"/>
<rect x="260.3" y="276.0" width="3.0" height="8.0" fill="#b2b2b2"/>
<rect x="227.8" y="284.0" width="28.0" height="55.0" fill="#b2b2b2"/>
<rect x="230.8" y="287.0" width="22.0" height="50.0" fill="#3c3c3c"/>
<rect x="227.3" y="337.5" width="29.0" height="2.5" fill="#c0c0c0"/>
<rect x="288.7" y="271.5" width="47.0" height="4.5" fill="#9c9c9c"/>
<rect x="291.7" y="276.0" width="41.0" height="64.0" fill="#8a8a8a"/>
<rect x="290.7" y="276.0" width="3.0" height="8.0" fill="#9c9c9c"/>
<rect x="330.7" y="276.0" width="3.0" height="8.0" fill="#9c9c9c"/>
<rect x="298.2" y="284.0" width="28.0" height="55.0" fill="#9c9c9c"/>
<rect x="301.2" y="287.0" width="22.0" height="50.0" fill="#3c3c3c"/>
<rect x="297.7" y="337.5" width="29.0" height="2.5" fill="#c0c0c0"/>
<rect x="559.5" y="271.5" width="47.0" height="4.5" fill="#8e8e8e"/>
<rect x="562.5" y="276.0" width="41.0" height="64.0" fill="#7a7a7a"/>
<rect x="561.5" y="276.0" width="3.0" height="8.0" fill="#8e8e8e"/>
<rect x="601.5" y="276.0" width="3.0" height="8.0" fill="#8e8e8e"/>
<rect x="569.0" y="284.0" width="28.0" height="55.0" fill="#8e8e8e"/>
<rect x="572.0" y="287.0" width="22.0" height="50.0" fill="#3c3c3c"/>
<rect x="568.5" y="337.5" width="29.0" height="2.5" fill="#c0c0c0"/>
<rect x="629.7" y="271.5" width="47.0" height="4.5" fill="#8e8e8e"/>
<rect x="632.7" y="276.0" width="41.0" height="64.0" fill="#868686"/>
<rect x="631.7" y="276.0" width="3.0" height="8.0" fill="#8e8e8e"/>
<rect x="671.7" y="276.0" width="3.0" height="8.0" fill="#8e8e8e"/>
<rect x="639.2" y="284.0" width="28.0" height="55.0" fill="#8e8e8e"/>
<rect x="642.2" y="287.0" width="22.0" height="50.0" fill="#3c3c3c"/>
<rect x="638.7" y="337.5" width="29.0" height="2.5" fill="#c0c0c0"/>
<rect x="187.5" y="360.5" width="160.5" height="16.5" fill="#6e6e6e"/>
<rect x="548.0" y="360.5" width="158.0" height="16.5" fill="#5c5c5c"/>
<rect x="190.0" y="364.0" width="156.0" height="4.0" fill="#b4b4b4"/>
<rect x="550.0" y="364.0" width="465.0" height="3.5" fill="#c0c0c0"/>
<rect x="190.0" y="372.0" width="158.0" height="5.0" fill="#444"/>
<rect x="548.0" y="371.0" width="282.0" height="5.0" fill="#3c3c3c"/>
<rect x="187.5" y="377.0" width="160.5" height="6.0" fill="#8e8e8e"/>
<rect x="548.0" y="377.0" width="152.0" height="6.0" fill="#7c7c7c"/>
<rect x="193.5" y="383.0" width="149.5" height="91.0" fill="#8a8a8a"/>
<rect x="215.0" y="386.0" width="55.0" height="32.0" fill="#6a6a6a"/>
<rect x="284.0" y="386.0" width="59.0" height="32.0" fill="#686868"/>
<rect x="215.0" y="420.0" width="55.0" height="54.0" fill="#8e8e8e"/>
<rect x="284.0" y="420.0" width="59.0" height="54.0" fill="#969696"/>
<rect x="193.5" y="383.0" width="21.5" height="91.0" fill="#8e8e8e"/>
<rect x="196.0" y="388.0" width="17.0" height="68.0" fill="#9a9a9a"/>
<rect x="270.0" y="388.0" width="12.0" height="86.0" fill="#646464"/>
<rect x="268.0" y="382.0" width="16.0" height="6.0" fill="#9a9a9a"/>
<rect x="550.0" y="383.0" width="155.0" height="91.0" fill="#686868"/>
<rect x="606.0" y="388.0" width="20.0" height="86.0" fill="#5a5a5a"/>
<rect x="626.0" y="383.0" width="74.0" height="91.0" fill="#767676"/>
<path d="M218.9 420.0 V412.0 A24.5 24.5 0 0 1 267.9 412.0 V420.0 Z" fill="#b4b4b4"/>
<path d="M224.4 456.0 V412.0 A19.0 19.0 0 0 1 262.4 412.0 V456.0 Z" fill="#7c7c7c"/>
<rect x="224.9" y="453.0" width="37.0" height="9.0" fill="#4a4a4a"/>
<path d="M289.1 420.0 V412.0 A24.5 24.5 0 0 1 338.1 412.0 V420.0 Z" fill="#b4b4b4"/>
<path d="M294.6 456.0 V412.0 A19.0 19.0 0 0 1 332.6 412.0 V456.0 Z" fill="#7c7c7c"/>
<rect x="295.1" y="453.0" width="37.0" height="9.0" fill="#4a4a4a"/>
<path d="M558.0 420.0 V412.0 A24.5 24.5 0 0 1 607.0 412.0 V420.0 Z" fill="#8c8c8c"/>
<path d="M563.5 456.0 V412.0 A19.0 19.0 0 0 1 601.5 412.0 V456.0 Z" fill="#5e5e5e"/>
<rect x="564.0" y="453.0" width="37.0" height="9.0" fill="#4a4a4a"/>
<path d="M628.2 420.0 V412.0 A24.5 24.5 0 0 1 677.2 412.0 V420.0 Z" fill="#8c8c8c"/>
<path d="M633.7 456.0 V412.0 A19.0 19.0 0 0 1 671.7 412.0 V456.0 Z" fill="#5e5e5e"/>
<rect x="634.2" y="453.0" width="37.0" height="9.0" fill="#4a4a4a"/>
<rect x="164.0" y="473.5" width="179.0" height="32.5" fill="#3a3a3a"/>
<rect x="200.0" y="478.0" width="100.0" height="22.0" fill="#444"/>
<rect x="550.0" y="474.0" width="163.0" height="32.0" fill="#383838"/>
</g>
<g id="n1c" filter="url(#nzh)">
<rect x="343.0" y="361.5" width="207.0" height="116.5" fill="#525252"/>
<rect x="343.0" y="361.5" width="207.0" height="22.5" fill="#444"/>
<rect x="404.0" y="440.0" width="23.0" height="22.0" fill="#9a9a9a"/>
<rect x="468.0" y="440.0" width="23.0" height="22.0" fill="#8a8a8a"/>
<rect x="404.0" y="405.0" width="23.0" height="35.0" fill="#6c6c6c"/>
<rect x="468.0" y="405.0" width="23.0" height="35.0" fill="#5e5e5e"/>
<rect x="343.0" y="440.0" width="13.0" height="38.0" fill="#a8a8a8"/>
<rect x="539.0" y="400.0" width="11.0" height="78.0" fill="#707070"/>
<rect x="343.0" y="478.0" width="207.0" height="28.0" fill="#404040"/>
</g>
<g id="n1s" filter="url(#nzs)">
<rect x="703.0" y="338.5" width="312.0" height="22.0" fill="#a8a8a8"/>
<rect x="860.0" y="338.5" width="155.0" height="22.0" fill="#c4c4c4"/>
<rect x="709.0" y="345.0" width="40.0" height="8.0" fill="#5a5a5a"/>
<rect x="762.5" y="345.0" width="40.5" height="8.0" fill="#5e5e5e"/>
<rect x="817.0" y="345.0" width="39.0" height="8.0" fill="#8c8c8c"/>
<rect x="872.0" y="345.0" width="39.0" height="8.0" fill="#b4b4b4"/>
<rect x="926.0" y="345.0" width="38.0" height="8.0" fill="#8a8a8a"/>
<rect x="980.0" y="345.0" width="35.0" height="8.0" fill="#8c8c8c"/>
<rect x="703.0" y="360.5" width="312.0" height="16.5" fill="#909090"/>
<rect x="830.0" y="360.5" width="185.0" height="16.5" fill="#c2c2c2"/>
<rect x="830.0" y="369.5" width="185.0" height="6.5" fill="#a2a2a2"/>
<rect x="706.0" y="369.5" width="124.0" height="6.5" fill="#444"/>
<rect x="703.0" y="360.5" width="312.0" height="1.3" fill="#5a5a5a"/>
<rect x="703.0" y="368.2" width="312.0" height="1.0" fill="#6a6a6a"/>
<rect x="703.0" y="383.0" width="312.0" height="91.0" fill="#9c9c9c"/>
<rect x="860.0" y="383.0" width="155.0" height="91.0" fill="#b6b6b6"/>
<rect x="703.0" y="383.0" width="157.0" height="31.0" fill="#686868"/>
<rect x="860.0" y="383.0" width="155.0" height="31.0" fill="#8c8c8c"/>
<rect x="686.0" y="383.0" width="17.0" height="91.0" fill="#7a7a7a"/>
<path d="M710.0 458.0 V412.5 A18.0 18.0 0 0 1 746.0 412.5 V458.0 Z" fill="#a8a8a8"/>
<path d="M715.5 455.0 V412.5 A12.5 12.5 0 0 1 740.5 412.5 V455.0 Z" fill="#8a8a8a"/>
<rect x="710.5" y="453.5" width="35.0" height="7.0" fill="#4c4c4c"/>
<path d="M765.0 458.0 V412.5 A18.0 18.0 0 0 1 801.0 412.5 V458.0 Z" fill="#a8a8a8"/>
<path d="M770.5 455.0 V412.5 A12.5 12.5 0 0 1 795.5 412.5 V455.0 Z" fill="#8a8a8a"/>
<rect x="765.5" y="453.5" width="35.0" height="7.0" fill="#4c4c4c"/>
<path d="M819.0 458.0 V412.5 A18.0 18.0 0 0 1 855.0 412.5 V458.0 Z" fill="#a8a8a8"/>
<path d="M824.5 455.0 V412.5 A12.5 12.5 0 0 1 849.5 412.5 V455.0 Z" fill="#8a8a8a"/>
<rect x="819.5" y="453.5" width="35.0" height="7.0" fill="#4c4c4c"/>
<path d="M873.7 458.0 V412.5 A18.0 18.0 0 0 1 909.7 412.5 V458.0 Z" fill="#c6c6c6"/>
<path d="M879.2 455.0 V412.5 A12.5 12.5 0 0 1 904.2 412.5 V455.0 Z" fill="#aaa"/>
<rect x="874.2" y="453.5" width="35.0" height="7.0" fill="#4c4c4c"/>
<path d="M927.5 458.0 V412.5 A18.0 18.0 0 0 1 963.5 412.5 V458.0 Z" fill="#c6c6c6"/>
<path d="M933.0 455.0 V412.5 A12.5 12.5 0 0 1 958.0 412.5 V455.0 Z" fill="#aaa"/>
<rect x="928.0" y="453.5" width="35.0" height="7.0" fill="#4c4c4c"/>
<path d="M982.3 458.0 V412.5 A18.0 18.0 0 0 1 1018.3 412.5 V458.0 Z" fill="#c6c6c6"/>
<path d="M987.8 455.0 V412.5 A12.5 12.5 0 0 1 1012.8 412.5 V455.0 Z" fill="#aaa"/>
<rect x="982.8" y="453.5" width="35.0" height="7.0" fill="#4c4c4c"/>
<rect x="713.0" y="474.0" width="302.0" height="32.0" fill="#383838"/>
<rect x="749.0" y="388.0" width="11.7" height="74.0" fill="#b0b0b0"/>
<rect x="747.0" y="383.0" width="15.7" height="5.5" fill="#b0b0b0"/>
<rect x="804.0" y="388.0" width="11.7" height="74.0" fill="#b0b0b0"/>
<rect x="802.0" y="383.0" width="15.7" height="5.5" fill="#b0b0b0"/>
<rect x="858.0" y="388.0" width="11.7" height="74.0" fill="#cacaca"/>
<rect x="856.0" y="383.0" width="15.7" height="5.5" fill="#cacaca"/>
<rect x="912.0" y="388.0" width="11.7" height="74.0" fill="#cacaca"/>
<rect x="910.0" y="383.0" width="15.7" height="5.5" fill="#cacaca"/>
<rect x="966.0" y="388.0" width="11.7" height="74.0" fill="#cacaca"/>
<rect x="964.0" y="383.0" width="15.7" height="5.5" fill="#cacaca"/>
</g>
<g id="n2" filter="url(#nz2)">
<rect x="164.0" y="474.0" width="120.0" height="31.5" fill="#303030"/>
<rect x="606.0" y="475.0" width="107.0" height="30.5" fill="#2e2e2e"/>
<path d="M284 505.5 V470 C286 458 296 455 303 456 C310 449 322 451 327 456 C336 457 340 466 338 476 L340 505.5 Z" fill="#2a2a2a"/>
<path d="M552 505.5 V472 C553 462 562 458 570 459 C577 453 590 454 596 459 C603 461 607 468 606 476 V505.5 Z" fill="#282828"/>
</g>
<g id="f1">
<rect x="219.0" y="265.5" width="50.0" height="6.0" fill="#f7a5a1"/>
<rect x="290.0" y="265.5" width="53.0" height="6.0" fill="#f7a5a1"/>
<rect x="281.8" y="283.0" width="2.8" height="77.0" fill="#f7a5a1"/>
<rect x="213.6" y="355.0" width="55.9" height="5.0" fill="#f7a5a1"/>
<rect x="282.0" y="333.5" width="61.0" height="26.5" fill="#f7a5a1"/>
<rect x="281.8" y="322.0" width="8.7" height="38.0" fill="#f7a5a1"/>
<rect x="552.0" y="265.5" width="61.0" height="6.0" fill="#f7a5a1"/>
<rect x="625.5" y="265.5" width="50.5" height="6.0" fill="#f7a5a1"/>
<rect x="609.5" y="262.0" width="3.5" height="98.0" fill="#f7a5a1"/>
<rect x="603.0" y="335.0" width="7.0" height="25.0" fill="#f7a5a1"/>
<rect x="552.0" y="354.0" width="58.0" height="6.0" fill="#f7a5a1"/>
<rect x="627.5" y="355.0" width="53.5" height="5.0" fill="#f7a5a1"/>
<rect x="699.0" y="250.0" width="3.6" height="110.0" fill="#f7a5a1"/>
<rect x="528.0" y="262.0" width="8.0" height="78.0" fill="#f7a5a1"/>
</g>
<g id="n1b" filter="url(#nzr)">
<rect x="290.5" y="334.5" width="53.5" height="18.0" fill="#565656"/>
<rect x="286.0" y="300.0" width="6.0" height="34.0" fill="#5e5e5e"/>
<rect x="552.0" y="336.5" width="50.5" height="16.5" fill="#4c4c4c"/>
<rect x="604.0" y="300.0" width="5.0" height="33.0" fill="#4c4c4c"/>
<rect x="262.0" y="268.0" width="8.0" height="22.0" fill="#5a5a5a"/>
<rect x="334.0" y="268.0" width="9.0" height="22.0" fill="#5e5e5e"/>
<rect x="552.0" y="266.0" width="10.0" height="24.0" fill="#4a4a4a"/>
<rect x="666.0" y="268.0" width="17.0" height="24.0" fill="#5c5c5c"/>
<rect x="528.0" y="300.0" width="8.0" height="38.0" fill="#555"/>
<rect x="193.0" y="209.0" width="18.0" height="20.0" fill="#8e8e8e"/>
<rect x="196.0" y="212.0" width="10.0" height="14.0" fill="#d0d0d0"/>
<rect x="213.0" y="209.0" width="54.0" height="4.5" fill="#a2a2a2"/>
<rect x="214.0" y="213.5" width="52.0" height="8.0" fill="#8c8c8c"/>
<rect x="232.0" y="220.0" width="30.0" height="5.0" fill="#909090"/>
<rect x="269.0" y="209.0" width="13.0" height="11.0" fill="#7c7c7c"/>
<rect x="284.0" y="209.0" width="55.0" height="4.5" fill="#a2a2a2"/>
<rect x="296.0" y="213.5" width="35.0" height="10.5" fill="#858585"/>
<rect x="340.5" y="209.0" width="10.5" height="13.0" fill="#777"/>
<rect x="544.0" y="209.0" width="8.0" height="15.0" fill="#747474"/>
<rect x="553.0" y="209.0" width="57.0" height="4.5" fill="#9a9a9a"/>
<rect x="567.0" y="213.5" width="34.0" height="10.0" fill="#868686"/>
<rect x="611.5" y="209.0" width="12.5" height="16.0" fill="#585858"/>
<rect x="626.0" y="209.0" width="72.0" height="4.5" fill="#8c8c8c"/>
<rect x="628.0" y="213.5" width="51.0" height="7.5" fill="#8a8a8a"/>
<rect x="646.0" y="220.0" width="33.0" height="4.5" fill="#868686"/>
<rect x="683.0" y="210.0" width="15.0" height="17.0" fill="#6a6a6a"/>
</g>
<g id="f1b">
<rect x="189.0" y="205.2" width="516.0" height="2.0" fill="#1e1e1e"/>
<rect x="696.0" y="201.5" width="9.5" height="4.0" fill="#222"/>
<rect x="191.0" y="204.0" width="8.0" height="2.0" fill="#222"/>
<rect x="193.0" y="255.5" width="512.5" height="6.5" fill="#e4e4e4"/>
<path d="M193.0 255.6 L705.5 255.6" stroke="#1a1a1a" stroke-width="0.90" fill="none"/>
<path d="M193.0 257.6 L705.5 257.6" stroke="#8a8a8a" stroke-width="0.50" fill="none"/>
<path d="M193.0 259.2 L705.5 259.2" stroke="#9a9a9a" stroke-width="0.50" fill="none"/>
<path d="M193.0 261.6 L705.5 261.6" stroke="#555" stroke-width="0.60" fill="none"/>
<g filter="url(#nz)">
<polygon points="340.0,240.5 448.3,191.5 557.0,240.5 543.0,240.5 448.3,200.0 354.0,240.5" fill="#8a8a8a"/>
</g>
<path d="M340 240 L448.3 192 L557 240" fill="none" stroke="#222" stroke-width="2.2"/>
<path d="M353.5 240 L448.3 199.3 L543.5 240" fill="none" stroke="#c8c8c8" stroke-width="1.4"/>
<polygon points="355.7,238.0 448.3,200.5 541.0,238.0" fill="#f7a5a1"/>
<rect x="340.0" y="238.0" width="217.0" height="2.8" fill="#f6f6f6"/>
<path d="M340.0 240.8 L557.0 240.8" stroke="#555" stroke-width="0.50" fill="none"/>
<rect x="360.1" y="271.8" width="47.0" height="4.0" fill="#727272"/>
<rect x="362.6" y="275.8" width="3.0" height="7.2" fill="#d8d8d8"/>
<rect x="401.6" y="275.8" width="3.0" height="7.2" fill="#d8d8d8"/>
<rect x="366.1" y="279.0" width="35.0" height="61.0" fill="#5e5e5e"/>
<rect x="369.6" y="285.0" width="28.0" height="55.0" fill="#3e3e3e"/>
<rect x="373.1" y="287.5" width="21.0" height="9.5" fill="#4a4a4a"/>
<path d="M373.1 287.5 L394.1 297.0" stroke="#888" stroke-width="0.60" fill="none"/>
<path d="M373.1 297.0 L394.1 287.5" stroke="#888" stroke-width="0.60" fill="none"/>
<rect x="373.1" y="300.5" width="21.0" height="39.0" fill="#c6a2b8"/>
<rect x="382.7" y="300.5" width="1.8" height="39.0" fill="#ececec"/>
<path d="M373.1 310.0 L394.1 310.0" stroke="#8a7a88" stroke-width="0.70" fill="none"/>
<path d="M373.1 320.0 L394.1 320.0" stroke="#8a7a88" stroke-width="0.70" fill="none"/>
<path d="M373.1 330.0 L394.1 330.0" stroke="#8a7a88" stroke-width="0.70" fill="none"/>
<rect x="369.6" y="300.5" width="2.5" height="39.5" fill="#e8e8e8"/>
<rect x="395.1" y="300.5" width="2.5" height="39.5" fill="#e8e8e8"/>
<rect x="424.1" y="271.8" width="47.0" height="4.0" fill="#727272"/>
<rect x="426.6" y="275.8" width="3.0" height="7.2" fill="#d8d8d8"/>
<rect x="465.6" y="275.8" width="3.0" height="7.2" fill="#d8d8d8"/>
<rect x="430.1" y="279.0" width="35.0" height="61.0" fill="#5e5e5e"/>
<rect x="433.6" y="285.0" width="28.0" height="55.0" fill="#3e3e3e"/>
<rect x="437.1" y="287.5" width="21.0" height="9.5" fill="#4a4a4a"/>
<path d="M437.1 287.5 L458.1 297.0" stroke="#888" stroke-width="0.60" fill="none"/>
<path d="M437.1 297.0 L458.1 287.5" stroke="#888" stroke-width="0.60" fill="none"/>
<rect x="437.1" y="300.5" width="21.0" height="39.0" fill="#c6a2b8"/>
<rect x="446.7" y="300.5" width="1.8" height="39.0" fill="#ececec"/>
<path d="M437.1 310.0 L458.1 310.0" stroke="#8a7a88" stroke-width="0.70" fill="none"/>
<path d="M437.1 320.0 L458.1 320.0" stroke="#8a7a88" stroke-width="0.70" fill="none"/>
<path d="M437.1 330.0 L458.1 330.0" stroke="#8a7a88" stroke-width="0.70" fill="none"/>
<rect x="433.6" y="300.5" width="2.5" height="39.5" fill="#e8e8e8"/>
<rect x="459.1" y="300.5" width="2.5" height="39.5" fill="#e8e8e8"/>
<rect x="488.1" y="271.8" width="47.0" height="4.0" fill="#727272"/>
<rect x="490.6" y="275.8" width="3.0" height="7.2" fill="#d8d8d8"/>
<rect x="529.6" y="275.8" width="3.0" height="7.2" fill="#d8d8d8"/>
<rect x="494.1" y="279.0" width="35.0" height="61.0" fill="#5e5e5e"/>
<rect x="497.6" y="285.0" width="28.0" height="55.0" fill="#3e3e3e"/>
<rect x="501.1" y="287.5" width="21.0" height="9.5" fill="#4a4a4a"/>
<path d="M501.1 287.5 L522.1 297.0" stroke="#888" stroke-width="0.60" fill="none"/>
<path d="M501.1 297.0 L522.1 287.5" stroke="#888" stroke-width="0.60" fill="none"/>
<rect x="501.1" y="300.5" width="21.0" height="39.0" fill="#c6a2b8"/>
<rect x="510.7" y="300.5" width="1.8" height="39.0" fill="#ececec"/>
<path d="M501.1 310.0 L522.1 310.0" stroke="#8a7a88" stroke-width="0.70" fill="none"/>
<path d="M501.1 320.0 L522.1 320.0" stroke="#8a7a88" stroke-width="0.70" fill="none"/>
<path d="M501.1 330.0 L522.1 330.0" stroke="#8a7a88" stroke-width="0.70" fill="none"/>
<rect x="497.6" y="300.5" width="2.5" height="39.5" fill="#e8e8e8"/>
<rect x="523.1" y="300.5" width="2.5" height="39.5" fill="#e8e8e8"/>
<rect x="388.0" y="310.0" width="6.0" height="21.0" fill="#3a3a3a"/>
<rect x="440.0" y="303.0" width="6.0" height="9.0" fill="#3a3a3a"/>
<rect x="451.0" y="311.0" width="6.0" height="11.0" fill="#444"/>
<rect x="408.2" y="262.0" width="14.9" height="13.0" fill="#565656"/>
<rect x="408.2" y="263.0" width="14.9" height="2.0" fill="#c4c4c4"/>
<rect x="409.2" y="267.0" width="12.9" height="2.5" fill="#a0a0a0"/>
<rect x="408.7" y="271.5" width="13.9" height="1.5" fill="#1e1e1e"/>
<rect x="411.7" y="269.5" width="7.9" height="2.0" fill="#d0d0d0"/>
<rect x="410.7" y="275.0" width="9.9" height="43.0" fill="#ffffff" stroke="#888" stroke-width="0.4"/>
<ellipse cx="415.6" cy="321.0" rx="4" ry="3.2" fill="#1e1e1e"/>
<rect x="411.1" y="324.0" width="9.0" height="3.0" fill="#2a2a2a"/>
<rect x="413.1" y="327.0" width="5.0" height="11.0" fill="#2c2c2c"/>
<rect x="411.1" y="336.5" width="9.0" height="3.5" fill="#555"/>
<rect x="471.7" y="262.0" width="14.8" height="13.0" fill="#565656"/>
<rect x="471.7" y="263.0" width="14.8" height="2.0" fill="#c4c4c4"/>
<rect x="472.7" y="267.0" width="12.8" height="2.5" fill="#a0a0a0"/>
<rect x="472.2" y="271.5" width="13.8" height="1.5" fill="#1e1e1e"/>
<rect x="475.2" y="269.5" width="7.8" height="2.0" fill="#d0d0d0"/>
<rect x="474.2" y="275.0" width="9.8" height="43.0" fill="#ffffff" stroke="#888" stroke-width="0.4"/>
<ellipse cx="479.1" cy="321.0" rx="4" ry="3.2" fill="#1e1e1e"/>
<rect x="474.6" y="324.0" width="9.0" height="3.0" fill="#2a2a2a"/>
<rect x="476.6" y="327.0" width="5.0" height="11.0" fill="#2c2c2c"/>
<rect x="474.6" y="336.5" width="9.0" height="3.5" fill="#555"/>
<ellipse cx="351.0" cy="321.0" rx="3.5" ry="3" fill="#222"/>
<rect x="348.0" y="324.0" width="6.0" height="14.0" fill="#2a2a2a"/>
<ellipse cx="542.5" cy="321.0" rx="3.5" ry="3" fill="#222"/>
<rect x="539.5" y="324.0" width="6.0" height="14.0" fill="#2a2a2a"/>
<rect x="231.3" y="287.5" width="21.0" height="9.5" fill="#3a3a3a"/>
<path d="M231.3 287.5 L252.3 297.0" stroke="#9a9a9a" stroke-width="0.60" fill="none"/>
<path d="M231.3 297.0 L252.3 287.5" stroke="#9a9a9a" stroke-width="0.60" fill="none"/>
<rect x="231.3" y="297.0" width="21.0" height="3.5" fill="#8c8c8c"/>
<rect x="231.3" y="300.5" width="21.0" height="36.5" fill="#353535"/>
<rect x="240.5" y="300.5" width="2.6" height="36.5" fill="#9c9c9c"/>
<path d="M231.3 312.0 L252.3 312.0" stroke="#8c8c8c" stroke-width="1.40" fill="none"/>
<path d="M231.3 324.0 L252.3 324.0" stroke="#8c8c8c" stroke-width="1.40" fill="none"/>
<path d="M231.3 336.5 L252.3 336.5" stroke="#c9a9bb" stroke-width="0.90" fill="none"/>
<rect x="301.7" y="287.5" width="21.0" height="9.5" fill="#3a3a3a"/>
<path d="M301.7 287.5 L322.7 297.0" stroke="#9a9a9a" stroke-width="0.60" fill="none"/>
<path d="M301.7 297.0 L322.7 287.5" stroke="#9a9a9a" stroke-width="0.60" fill="none"/>
<rect x="301.7" y="297.0" width="21.0" height="3.5" fill="#8c8c8c"/>
<rect x="301.7" y="300.5" width="21.0" height="36.5" fill="#353535"/>
<rect x="310.9" y="300.5" width="2.6" height="36.5" fill="#9c9c9c"/>
<path d="M301.7 312.0 L322.7 312.0" stroke="#8c8c8c" stroke-width="1.40" fill="none"/>
<path d="M301.7 324.0 L322.7 324.0" stroke="#8c8c8c" stroke-width="1.40" fill="none"/>
<path d="M301.7 336.5 L322.7 336.5" stroke="#c9a9bb" stroke-width="0.90" fill="none"/>
<rect x="572.5" y="287.5" width="21.0" height="9.5" fill="#3a3a3a"/>
<path d="M572.5 287.5 L593.5 297.0" stroke="#9a9a9a" stroke-width="0.60" fill="none"/>
<path d="M572.5 297.0 L593.5 287.5" stroke="#9a9a9a" stroke-width="0.60" fill="none"/>
<rect x="572.5" y="297.0" width="21.0" height="3.5" fill="#8c8c8c"/>
<rect x="572.5" y="300.5" width="21.0" height="36.5" fill="#353535"/>
<rect x="581.7" y="300.5" width="2.6" height="36.5" fill="#9c9c9c"/>
<path d="M572.5 312.0 L593.5 312.0" stroke="#8c8c8c" stroke-width="1.40" fill="none"/>
<path d="M572.5 324.0 L593.5 324.0" stroke="#8c8c8c" stroke-width="1.40" fill="none"/>
<path d="M572.5 336.5 L593.5 336.5" stroke="#c9a9bb" stroke-width="0.90" fill="none"/>
<rect x="642.7" y="287.5" width="21.0" height="9.5" fill="#3a3a3a"/>
<path d="M642.7 287.5 L663.7 297.0" stroke="#9a9a9a" stroke-width="0.60" fill="none"/>
<path d="M642.7 297.0 L663.7 287.5" stroke="#9a9a9a" stroke-width="0.60" fill="none"/>
<rect x="642.7" y="297.0" width="21.0" height="3.5" fill="#8c8c8c"/>
<rect x="642.7" y="300.5" width="21.0" height="36.5" fill="#353535"/>
<rect x="651.9" y="300.5" width="2.6" height="36.5" fill="#9c9c9c"/>
<path d="M642.7 312.0 L663.7 312.0" stroke="#8c8c8c" stroke-width="1.40" fill="none"/>
<path d="M642.7 324.0 L663.7 324.0" stroke="#8c8c8c" stroke-width="1.40" fill="none"/>
<path d="M642.7 336.5 L663.7 336.5" stroke="#c9a9bb" stroke-width="0.90" fill="none"/>
<rect x="581.5" y="303.0" width="2.0" height="34.0" fill="#f0f0f0"/>
<rect x="592.0" y="290.0" width="2.0" height="47.0" fill="#e8e8e8"/>
<rect x="346.7" y="339.5" width="201.3" height="2.5" fill="#2e2e2e"/>
<rect x="346.7" y="342.0" width="201.3" height="12.5" fill="#6a5f58"/>
<rect x="349.5" y="343.0" width="1.7" height="10.0" fill="#e9e9e9"/>
<rect x="352.9" y="343.0" width="1.7" height="10.0" fill="#e9e9e9"/>
<rect x="356.3" y="343.0" width="1.7" height="10.0" fill="#e9e9e9"/>
<rect x="359.7" y="343.0" width="1.7" height="10.0" fill="#e9e9e9"/>
<rect x="363.1" y="343.0" width="1.7" height="10.0" fill="#e9e9e9"/>
<rect x="366.5" y="343.0" width="1.7" height="10.0" fill="#e9e9e9"/>
<rect x="369.9" y="343.0" width="1.7" height="10.0" fill="#e9e9e9"/>
<rect x="373.3" y="343.0" width="1.7" height="10.0" fill="#e9e9e9"/>
<rect x="376.7" y="343.0" width="1.7" height="10.0" fill="#e9e9e9"/>
<rect x="380.1" y="343.0" width="1.7" height="10.0" fill="#e9e9e9"/>
<rect x="383.5" y="343.0" width="1.7" height="10.0" fill="#e9e9e9"/>
<rect x="386.9" y="343.0" width="1.7" height="10.0" fill="#e9e9e9"/>
<rect x="390.3" y="343.0" width="1.7" height="10.0" fill="#e9e9e9"/>
<rect x="393.7" y="343.0" width="1.7" height="10.0" fill="#e9e9e9"/>
<rect x="397.1" y="343.0" width="1.7" height="10.0" fill="#e9e9e9"/>
<rect x="400.5" y="343.0" width="1.7" height="10.0" fill="#e9e9e9"/>
<rect x="403.9" y="343.0" width="1.7" height="10.0" fill="#e9e9e9"/>
<rect x="407.3" y="343.0" width="1.7" height="10.0" fill="#e9e9e9"/>
<rect x="424.3" y="343.0" width="1.7" height="10.0" fill="#e9e9e9"/>
<rect x="427.7" y="343.0" width="1.7" height="10.0" fill="#e9e9e9"/>
<rect x="431.1" y="343.0" width="1.7" height="10.0" fill="#e9e9e9"/>
<rect x="434.5" y="343.0" width="1.7" height="10.0" fill="#e9e9e9"/>
<rect x="437.9" y="343.0" width="1.7" height="10.0" fill="#e9e9e9"/>
<rect x="441.3" y="343.0" width="1.7" height="10.0" fill="#e9e9e9"/>
<rect x="444.7" y="343.0" width="1.7" height="10.0" fill="#e9e9e9"/>
<rect x="448.1" y="343.0" width="1.7" height="10.0" fill="#e9e9e9"/>
<rect x="451.5" y="343.0" width="1.7" height="10.0" fill="#e9e9e9"/>
<rect x="454.9" y="343.0" width="1.7" height="10.0" fill="#e9e9e9"/>
<rect x="458.3" y="343.0" width="1.7" height="10.0" fill="#e9e9e9"/>
<rect x="461.7" y="343.0" width="1.7" height="10.0" fill="#e9e9e9"/>
<rect x="465.1" y="343.0" width="1.7" height="10.0" fill="#e9e9e9"/>
<rect x="468.5" y="343.0" width="1.7" height="10.0" fill="#e9e9e9"/>
<rect x="471.9" y="343.0" width="1.7" height="10.0" fill="#e9e9e9"/>
<rect x="488.9" y="343.0" width="1.7" height="10.0" fill="#e9e9e9"/>
<rect x="492.3" y="343.0" width="1.7" height="10.0" fill="#e9e9e9"/>
<rect x="495.7" y="343.0" width="1.7" height="10.0" fill="#e9e9e9"/>
<rect x="499.1" y="343.0" width="1.7" height="10.0" fill="#e9e9e9"/>
<rect x="502.5" y="343.0" width="1.7" height="10.0" fill="#e9e9e9"/>
<rect x="505.9" y="343.0" width="1.7" height="10.0" fill="#e9e9e9"/>
<rect x="509.3" y="343.0" width="1.7" height="10.0" fill="#e9e9e9"/>
<rect x="512.7" y="343.0" width="1.7" height="10.0" fill="#e9e9e9"/>
<rect x="516.1" y="343.0" width="1.7" height="10.0" fill="#e9e9e9"/>
<rect x="519.5" y="343.0" width="1.7" height="10.0" fill="#e9e9e9"/>
<rect x="522.9" y="343.0" width="1.7" height="10.0" fill="#e9e9e9"/>
<rect x="526.3" y="343.0" width="1.7" height="10.0" fill="#e9e9e9"/>
<rect x="529.7" y="343.0" width="1.7" height="10.0" fill="#e9e9e9"/>
<rect x="533.1" y="343.0" width="1.7" height="10.0" fill="#e9e9e9"/>
<rect x="536.5" y="343.0" width="1.7" height="10.0" fill="#e9e9e9"/>
<rect x="539.9" y="343.0" width="1.7" height="10.0" fill="#e9e9e9"/>
<rect x="543.3" y="343.0" width="1.7" height="10.0" fill="#e9e9e9"/>
<rect x="346.7" y="352.5" width="201.3" height="2.0" fill="#3a342a"/>
<rect x="346.7" y="354.5" width="201.3" height="5.5" fill="#9c8b6d" stroke="#5e533f" stroke-width="0.4"/>
<rect x="410.7" y="341.0" width="9.9" height="19.0" fill="#9c8b6d" stroke="#5e533f" stroke-width="0.4"/>
<rect x="473.7" y="341.0" width="10.1" height="19.0" fill="#9c8b6d" stroke="#5e533f" stroke-width="0.4"/>
<rect x="346.7" y="341.0" width="10.3" height="19.0" fill="#4a4a4a"/>
<rect x="539.0" y="341.0" width="9.0" height="19.0" fill="#4a4238"/>
<rect x="344.0" y="360.0" width="206.0" height="1.6" fill="#eeeeee"/>
<path d="M350.0 376.0 L545.0 376.0" stroke="#8c7c60" stroke-width="0.70" fill="none"/>
<rect x="352.0" y="384.2" width="12" height="3.4" rx="1.5" fill="#4a4338" stroke="#9c8b6d" stroke-width="0.8"/>
<rect x="408.5" y="384.2" width="12" height="3.4" rx="1.5" fill="#4a4338" stroke="#9c8b6d" stroke-width="0.8"/>
<rect x="472.5" y="384.2" width="12" height="3.4" rx="1.5" fill="#4a4338" stroke="#9c8b6d" stroke-width="0.8"/>
<rect x="530.0" y="384.2" width="12" height="3.4" rx="1.5" fill="#4a4338" stroke="#9c8b6d" stroke-width="0.8"/>
<rect x="356.6" y="388.0" width="6.0" height="70.0" fill="#9c8b6d" stroke="#5e533f" stroke-width="0.3"/>
<rect x="355.1" y="457.5" width="9.0" height="20.5" fill="#9c8b6d" stroke="#5e533f" stroke-width="0.3"/>
<rect x="533.0" y="388.0" width="6.0" height="70.0" fill="#9c8b6d" stroke="#5e533f" stroke-width="0.3"/>
<rect x="531.5" y="457.5" width="9.0" height="20.5" fill="#9c8b6d" stroke="#5e533f" stroke-width="0.3"/>
<path d="M364.3 477.5 V412.0 A19.3 19.3 0 0 1 402.9 412.0 V477.5 Z" fill="#9c8b6d"/>
<path d="M367.3 477.5 V412.0 A16.3 16.3 0 0 1 399.9 412.0 V477.5 Z" fill="#2e2e2e"/>
<rect x="367.3" y="413.0" width="32.6" height="63.0" fill="#6c6c6c"/>
<rect x="371.0" y="413.5" width="25.2" height="61.5" fill="#8a4a2b"/>
<rect x="367.3" y="411.5" width="32.6" height="2.3" fill="#222"/>
<path d="M372.1 411.5 A11.5 11.5 0 0 1 395.1 411.5 Z" fill="#34566f"/>
<path d="M383.6 411.5 L394.4 407.6" stroke="#222" stroke-width="0.80" fill="none"/>
<path d="M383.6 411.5 L392.4 404.1" stroke="#222" stroke-width="0.80" fill="none"/>
<path d="M383.6 411.5 L389.4 401.5" stroke="#222" stroke-width="0.80" fill="none"/>
<path d="M383.6 411.5 L385.6 400.2" stroke="#222" stroke-width="0.80" fill="none"/>
<path d="M383.6 411.5 L381.6 400.2" stroke="#222" stroke-width="0.80" fill="none"/>
<path d="M383.6 411.5 L377.9 401.5" stroke="#222" stroke-width="0.80" fill="none"/>
<path d="M383.6 411.5 L374.8 404.1" stroke="#222" stroke-width="0.80" fill="none"/>
<path d="M383.6 411.5 L372.8 407.6" stroke="#222" stroke-width="0.80" fill="none"/>
<path d="M379.6 411.5 A4.0 4.0 0 0 1 387.6 411.5 Z" fill="#2a2a2a"/>
<path d="M383.6 413.5 L383.6 475.0" stroke="#4a2414" stroke-width="0.90" fill="none"/>
<path d="M371.0 420.0 L396.2 420.0" stroke="#5a2d19" stroke-width="0.80" fill="none"/>
<path d="M371.0 428.5 L396.2 428.5" stroke="#5a2d19" stroke-width="0.80" fill="none"/>
<path d="M371.0 433.0 L396.2 433.0" stroke="#5a2d19" stroke-width="0.80" fill="none"/>
<path d="M371.0 447.0 L396.2 447.0" stroke="#5a2d19" stroke-width="0.80" fill="none"/>
<path d="M371.0 452.5 L396.2 452.5" stroke="#5a2d19" stroke-width="0.80" fill="none"/>
<path d="M371.0 466.0 L396.2 466.0" stroke="#5a2d19" stroke-width="0.80" fill="none"/>
<rect x="372.8" y="415.0" width="8.6" height="4.0" fill="none" stroke="#5a2d19" stroke-width="0.6"/>
<rect x="385.8" y="415.0" width="8.6" height="4.0" fill="none" stroke="#5a2d19" stroke-width="0.6"/>
<rect x="372.8" y="421.5" width="8.6" height="6.0" fill="none" stroke="#5a2d19" stroke-width="0.6"/>
<rect x="385.8" y="421.5" width="8.6" height="6.0" fill="none" stroke="#5a2d19" stroke-width="0.6"/>
<rect x="372.8" y="435.0" width="8.6" height="11.0" fill="none" stroke="#5a2d19" stroke-width="0.6"/>
<rect x="385.8" y="435.0" width="8.6" height="11.0" fill="none" stroke="#5a2d19" stroke-width="0.6"/>
<rect x="372.8" y="454.0" width="8.6" height="10.5" fill="none" stroke="#5a2d19" stroke-width="0.6"/>
<rect x="385.8" y="454.0" width="8.6" height="10.5" fill="none" stroke="#5a2d19" stroke-width="0.6"/>
<rect x="372.8" y="467.5" width="8.6" height="6.5" fill="none" stroke="#5a2d19" stroke-width="0.6"/>
<rect x="385.8" y="467.5" width="8.6" height="6.5" fill="none" stroke="#5a2d19" stroke-width="0.6"/>
<path d="M428.3 477.5 V412.0 A19.3 19.3 0 0 1 466.9 412.0 V477.5 Z" fill="#9c8b6d"/>
<path d="M431.3 477.5 V412.0 A16.3 16.3 0 0 1 463.9 412.0 V477.5 Z" fill="#2e2e2e"/>
<rect x="431.3" y="413.0" width="32.6" height="63.0" fill="#6c6c6c"/>
<rect x="435.0" y="413.5" width="25.2" height="61.5" fill="#8a4a2b"/>
<rect x="431.3" y="411.5" width="32.6" height="2.3" fill="#222"/>
<path d="M436.1 411.5 A11.5 11.5 0 0 1 459.1 411.5 Z" fill="#40363c"/>
<path d="M447.6 411.5 L458.4 407.6" stroke="#222" stroke-width="0.80" fill="none"/>
<path d="M447.6 411.5 L456.4 404.1" stroke="#222" stroke-width="0.80" fill="none"/>
<path d="M447.6 411.5 L453.4 401.5" stroke="#222" stroke-width="0.80" fill="none"/>
<path d="M447.6 411.5 L449.6 400.2" stroke="#222" stroke-width="0.80" fill="none"/>
<path d="M447.6 411.5 L445.6 400.2" stroke="#222" stroke-width="0.80" fill="none"/>
<path d="M447.6 411.5 L441.9 401.5" stroke="#222" stroke-width="0.80" fill="none"/>
<path d="M447.6 411.5 L438.8 404.1" stroke="#222" stroke-width="0.80" fill="none"/>
<path d="M447.6 411.5 L436.8 407.6" stroke="#222" stroke-width="0.80" fill="none"/>
<path d="M443.6 411.5 A4.0 4.0 0 0 1 451.6 411.5 Z" fill="#2a2a2a"/>
<path d="M447.6 413.5 L447.6 475.0" stroke="#4a2414" stroke-width="0.90" fill="none"/>
<path d="M435.0 420.0 L460.2 420.0" stroke="#5a2d19" stroke-width="0.80" fill="none"/>
<path d="M435.0 428.5 L460.2 428.5" stroke="#5a2d19" stroke-width="0.80" fill="none"/>
<path d="M435.0 433.0 L460.2 433.0" stroke="#5a2d19" stroke-width="0.80" fill="none"/>
<path d="M435.0 447.0 L460.2 447.0" stroke="#5a2d19" stroke-width="0.80" fill="none"/>
<path d="M435.0 452.5 L460.2 452.5" stroke="#5a2d19" stroke-width="0.80" fill="none"/>
<path d="M435.0 466.0 L460.2 466.0" stroke="#5a2d19" stroke-width="0.80" fill="none"/>
<rect x="436.8" y="415.0" width="8.6" height="4.0" fill="none" stroke="#5a2d19" stroke-width="0.6"/>
<rect x="449.8" y="415.0" width="8.6" height="4.0" fill="none" stroke="#5a2d19" stroke-width="0.6"/>
<rect x="436.8" y="421.5" width="8.6" height="6.0" fill="none" stroke="#5a2d19" stroke-width="0.6"/>
<rect x="449.8" y="421.5" width="8.6" height="6.0" fill="none" stroke="#5a2d19" stroke-width="0.6"/>
<rect x="436.8" y="435.0" width="8.6" height="11.0" fill="none" stroke="#5a2d19" stroke-width="0.6"/>
<rect x="449.8" y="435.0" width="8.6" height="11.0" fill="none" stroke="#5a2d19" stroke-width="0.6"/>
<rect x="436.8" y="454.0" width="8.6" height="10.5" fill="none" stroke="#5a2d19" stroke-width="0.6"/>
<rect x="449.8" y="454.0" width="8.6" height="10.5" fill="none" stroke="#5a2d19" stroke-width="0.6"/>
<rect x="436.8" y="467.5" width="8.6" height="6.5" fill="none" stroke="#5a2d19" stroke-width="0.6"/>
<rect x="449.8" y="467.5" width="8.6" height="6.5" fill="none" stroke="#5a2d19" stroke-width="0.6"/>
<path d="M492.3 477.5 V412.0 A19.3 19.3 0 0 1 530.9 412.0 V477.5 Z" fill="#9c8b6d"/>
<path d="M495.3 477.5 V412.0 A16.3 16.3 0 0 1 527.9 412.0 V477.5 Z" fill="#2e2e2e"/>
<rect x="495.3" y="413.0" width="32.6" height="63.0" fill="#6c6c6c"/>
<rect x="499.0" y="413.5" width="25.2" height="61.5" fill="#8a4a2b"/>
<rect x="495.3" y="411.5" width="32.6" height="2.3" fill="#222"/>
<path d="M500.1 411.5 A11.5 11.5 0 0 1 523.1 411.5 Z" fill="#8f6e80"/>
<path d="M511.6 411.5 L522.4 407.6" stroke="#222" stroke-width="0.80" fill="none"/>
<path d="M511.6 411.5 L520.4 404.1" stroke="#222" stroke-width="0.80" fill="none"/>
<path d="M511.6 411.5 L517.4 401.5" stroke="#222" stroke-width="0.80" fill="none"/>
<path d="M511.6 411.5 L513.6 400.2" stroke="#222" stroke-width="0.80" fill="none"/>
<path d="M511.6 411.5 L509.6 400.2" stroke="#222" stroke-width="0.80" fill="none"/>
<path d="M511.6 411.5 L505.9 401.5" stroke="#222" stroke-width="0.80" fill="none"/>
<path d="M511.6 411.5 L502.8 404.1" stroke="#222" stroke-width="0.80" fill="none"/>
<path d="M511.6 411.5 L500.8 407.6" stroke="#222" stroke-width="0.80" fill="none"/>
<path d="M507.6 411.5 A4.0 4.0 0 0 1 515.6 411.5 Z" fill="#2a2a2a"/>
<path d="M511.6 413.5 L511.6 475.0" stroke="#4a2414" stroke-width="0.90" fill="none"/>
<path d="M499.0 420.0 L524.2 420.0" stroke="#5a2d19" stroke-width="0.80" fill="none"/>
<path d="M499.0 428.5 L524.2 428.5" stroke="#5a2d19" stroke-width="0.80" fill="none"/>
<path d="M499.0 433.0 L524.2 433.0" stroke="#5a2d19" stroke-width="0.80" fill="none"/>
<path d="M499.0 447.0 L524.2 447.0" stroke="#5a2d19" stroke-width="0.80" fill="none"/>
<path d="M499.0 452.5 L524.2 452.5" stroke="#5a2d19" stroke-width="0.80" fill="none"/>
<path d="M499.0 466.0 L524.2 466.0" stroke="#5a2d19" stroke-width="0.80" fill="none"/>
<rect x="500.8" y="415.0" width="8.6" height="4.0" fill="none" stroke="#5a2d19" stroke-width="0.6"/>
<rect x="513.8" y="415.0" width="8.6" height="4.0" fill="none" stroke="#5a2d19" stroke-width="0.6"/>
<rect x="500.8" y="421.5" width="8.6" height="6.0" fill="none" stroke="#5a2d19" stroke-width="0.6"/>
<rect x="513.8" y="421.5" width="8.6" height="6.0" fill="none" stroke="#5a2d19" stroke-width="0.6"/>
<rect x="500.8" y="435.0" width="8.6" height="11.0" fill="none" stroke="#5a2d19" stroke-width="0.6"/>
<rect x="513.8" y="435.0" width="8.6" height="11.0" fill="none" stroke="#5a2d19" stroke-width="0.6"/>
<rect x="500.8" y="454.0" width="8.6" height="10.5" fill="none" stroke="#5a2d19" stroke-width="0.6"/>
<rect x="513.8" y="454.0" width="8.6" height="10.5" fill="none" stroke="#5a2d19" stroke-width="0.6"/>
<rect x="500.8" y="467.5" width="8.6" height="6.5" fill="none" stroke="#5a2d19" stroke-width="0.6"/>
<rect x="513.8" y="467.5" width="8.6" height="6.5" fill="none" stroke="#5a2d19" stroke-width="0.6"/>
<rect x="369.0" y="459.5" width="30.0" height="1.5" fill="#d8d8d8"/>
<rect x="432.0" y="459.5" width="30.0" height="1.5" fill="#d0d0d0"/>
<rect x="496.0" y="459.5" width="16.0" height="1.5" fill="#d0d0d0"/>
<rect x="369.0" y="472.0" width="22.0" height="5.0" fill="#1c1c1c"/>
<path d="M505 454 C507 450 514 451 518 452 L519 476 L515 476 L514 466 L510 466 L509 476 L506 476 Z" fill="#dedede"/>
<path d="M440 446 C444 440 452 442 456 450 L458 474 L452 474 L450 462 L446 474 L441 474 Z" fill="#6e6e6e"/>
<rect x="444.6" y="404.0" width="6.0" height="21.0" fill="#2a2a2a"/>
<path d="M407.0 484.5 L545.0 484.5" stroke="#b4b4b4" stroke-width="0.90" fill="none"/>
<path d="M445.0 489.5 L545.0 489.5" stroke="#b4b4b4" stroke-width="0.90" fill="none"/>
<path d="M476.0 493.5 L545.0 493.5" stroke="#b4b4b4" stroke-width="0.90" fill="none"/>
<path d="M478.0 497.5 L545.0 497.5" stroke="#b4b4b4" stroke-width="0.90" fill="none"/>
<path d="M478.0 501.5 L545.0 501.5" stroke="#b4b4b4" stroke-width="0.90" fill="none"/>
<rect x="333.5" y="480.0" width="12.5" height="21.5" fill="#9c8b6d"/>
<rect x="549.0" y="480.0" width="7.0" height="21.5" fill="#9c8b6d"/>
<polygon points="200.0,496.0 240.0,494.0 262.0,498.0 225.0,500.0" fill="#7c6e56"/>
<polygon points="640.0,494.0 680.0,492.0 690.0,497.0 650.0,498.0" fill="#6e634e"/>
<path d="M227.9 412.0 A15.5 15.5 0 0 1 258.9 412.0 Z" fill="#2c2c2c"/>
<path d="M229.4 412.0 A14.0 14.0 0 0 1 257.4 412.0 Z" fill="#cfcfcf"/>
<path d="M230.8 412.0 A12.6 12.6 0 0 1 256.0 412.0 Z" fill="#b496a8"/>
<path d="M243.4 412.0 L243.4 399.4" stroke="#2a2a2a" stroke-width="1.20" fill="none"/>
<path d="M231.1 412 A6.3 9 0 0 1 243.4 412 A6.3 9 0 0 1 255.7 412" fill="none" stroke="#2e2e2e" stroke-width="1.1"/>
<circle cx="243.4" cy="403.5" r="2.6" fill="none" stroke="#2e2e2e" stroke-width="1"/>
<path d="M237.2 412 L237.2 405 M249.6 412 L249.6 405" stroke="#3a3a3a" stroke-width="0.9"/>
<rect x="225.9" y="411.5" width="35.0" height="2.5" fill="#1e1e1e"/>
<rect x="227.0" y="416.5" width="4.0" height="36.5" fill="#ffffff"/>
<rect x="255.8" y="416.5" width="4.0" height="36.5" fill="#ffffff"/>
<rect x="225.9" y="414.0" width="6.0" height="3.0" fill="#2a2a2a"/>
<rect x="254.9" y="414.0" width="6.0" height="3.0" fill="#2a2a2a"/>
<rect x="231.9" y="417.0" width="23.0" height="28.0" fill="#c6a2b8"/>
<rect x="231.9" y="417.0" width="5.5" height="7.0" fill="#3d6a88"/>
<rect x="233.4" y="436.0" width="5.0" height="5.0" fill="#3d6a88"/>
<rect x="231.9" y="445.0" width="23.0" height="8.0" fill="#0e0e0e"/>
<rect x="242.2" y="417.0" width="2.4" height="36.0" fill="#8e8e8e"/>
<path d="M231.9 426.0 L254.9 426.0" stroke="#8e8e8e" stroke-width="1.20" fill="none"/>
<path d="M231.9 435.5 L254.9 435.5" stroke="#8e8e8e" stroke-width="1.20" fill="none"/>
<path d="M231.9 444.5 L254.9 444.5" stroke="#8e8e8e" stroke-width="1.20" fill="none"/>
<path d="M298.1 412.0 A15.5 15.5 0 0 1 329.1 412.0 Z" fill="#2c2c2c"/>
<path d="M299.6 412.0 A14.0 14.0 0 0 1 327.6 412.0 Z" fill="#cfcfcf"/>
<path d="M301.0 412.0 A12.6 12.6 0 0 1 326.2 412.0 Z" fill="#b496a8"/>
<path d="M313.6 412.0 L313.6 399.4" stroke="#2a2a2a" stroke-width="1.20" fill="none"/>
<path d="M301.3 412 A6.3 9 0 0 1 313.6 412 A6.3 9 0 0 1 325.9 412" fill="none" stroke="#2e2e2e" stroke-width="1.1"/>
<circle cx="313.6" cy="403.5" r="2.6" fill="none" stroke="#2e2e2e" stroke-width="1"/>
<path d="M307.4 412 L307.4 405 M319.8 412 L319.8 405" stroke="#3a3a3a" stroke-width="0.9"/>
<rect x="296.1" y="411.5" width="35.0" height="2.5" fill="#1e1e1e"/>
<rect x="297.2" y="416.5" width="4.0" height="36.5" fill="#ffffff"/>
<rect x="326.0" y="416.5" width="4.0" height="36.5" fill="#ffffff"/>
<rect x="296.1" y="414.0" width="6.0" height="3.0" fill="#2a2a2a"/>
<rect x="325.1" y="414.0" width="6.0" height="3.0" fill="#2a2a2a"/>
<rect x="302.1" y="417.0" width="23.0" height="28.0" fill="#c6a2b8"/>
<rect x="302.1" y="417.0" width="10.5" height="24.0" fill="#3d6a88"/>
<rect x="302.1" y="445.0" width="23.0" height="8.0" fill="#0e0e0e"/>
<rect x="312.4" y="417.0" width="2.4" height="36.0" fill="#8e8e8e"/>
<path d="M302.1 426.0 L325.1 426.0" stroke="#8e8e8e" stroke-width="1.20" fill="none"/>
<path d="M302.1 435.5 L325.1 435.5" stroke="#8e8e8e" stroke-width="1.20" fill="none"/>
<path d="M302.1 444.5 L325.1 444.5" stroke="#8e8e8e" stroke-width="1.20" fill="none"/>
<path d="M567.0 412.0 A15.5 15.5 0 0 1 598.0 412.0 Z" fill="#2c2c2c"/>
<path d="M568.5 412.0 A14.0 14.0 0 0 1 596.5 412.0 Z" fill="#cfcfcf"/>
<path d="M569.9 412.0 A12.6 12.6 0 0 1 595.1 412.0 Z" fill="#8c8086"/>
<path d="M582.5 412.0 L582.5 399.4" stroke="#2a2a2a" stroke-width="1.20" fill="none"/>
<path d="M570.2 412 A6.3 9 0 0 1 582.5 412 A6.3 9 0 0 1 594.8 412" fill="none" stroke="#2e2e2e" stroke-width="1.1"/>
<circle cx="582.5" cy="403.5" r="2.6" fill="none" stroke="#2e2e2e" stroke-width="1"/>
<path d="M576.3 412 L576.3 405 M588.7 412 L588.7 405" stroke="#3a3a3a" stroke-width="0.9"/>
<rect x="565.0" y="411.5" width="35.0" height="2.5" fill="#1e1e1e"/>
<rect x="566.1" y="416.5" width="4.0" height="36.5" fill="#ffffff"/>
<rect x="594.9" y="416.5" width="4.0" height="36.5" fill="#ffffff"/>
<rect x="565.0" y="414.0" width="6.0" height="3.0" fill="#2a2a2a"/>
<rect x="594.0" y="414.0" width="6.0" height="3.0" fill="#2a2a2a"/>
<rect x="571.0" y="417.0" width="23.0" height="28.0" fill="#7c7478"/>
<rect x="584.5" y="418.0" width="6.0" height="10.0" fill="#c6a2b8"/>
<rect x="584.5" y="436.0" width="7.0" height="8.0" fill="#c6a2b8"/>
<rect x="571.0" y="445.0" width="23.0" height="8.0" fill="#0e0e0e"/>
<rect x="581.3" y="417.0" width="2.4" height="36.0" fill="#8e8e8e"/>
<path d="M571.0 426.0 L594.0 426.0" stroke="#8e8e8e" stroke-width="1.20" fill="none"/>
<path d="M571.0 435.5 L594.0 435.5" stroke="#8e8e8e" stroke-width="1.20" fill="none"/>
<path d="M571.0 444.5 L594.0 444.5" stroke="#8e8e8e" stroke-width="1.20" fill="none"/>
<path d="M637.2 412.0 A15.5 15.5 0 0 1 668.2 412.0 Z" fill="#2c2c2c"/>
<path d="M638.7 412.0 A14.0 14.0 0 0 1 666.7 412.0 Z" fill="#cfcfcf"/>
<path d="M640.1 412.0 A12.6 12.6 0 0 1 665.3 412.0 Z" fill="#b496a8"/>
<path d="M652.7 412.0 L652.7 399.4" stroke="#2a2a2a" stroke-width="1.20" fill="none"/>
<path d="M640.4 412 A6.3 9 0 0 1 652.7 412 A6.3 9 0 0 1 665.0 412" fill="none" stroke="#2e2e2e" stroke-width="1.1"/>
<circle cx="652.7" cy="403.5" r="2.6" fill="none" stroke="#2e2e2e" stroke-width="1"/>
<path d="M646.5 412 L646.5 405 M658.9 412 L658.9 405" stroke="#3a3a3a" stroke-width="0.9"/>
<rect x="635.2" y="411.5" width="35.0" height="2.5" fill="#1e1e1e"/>
<rect x="636.3" y="416.5" width="4.0" height="36.5" fill="#ffffff"/>
<rect x="665.1" y="416.5" width="4.0" height="36.5" fill="#ffffff"/>
<rect x="635.2" y="414.0" width="6.0" height="3.0" fill="#2a2a2a"/>
<rect x="664.2" y="414.0" width="6.0" height="3.0" fill="#2a2a2a"/>
<rect x="641.2" y="417.0" width="23.0" height="28.0" fill="#c6a2b8"/>
<rect x="655.7" y="419.0" width="6.0" height="22.0" fill="#3d6a88"/>
<rect x="641.2" y="445.0" width="23.0" height="8.0" fill="#0e0e0e"/>
<rect x="651.5" y="417.0" width="2.4" height="36.0" fill="#8e8e8e"/>
<path d="M641.2 426.0 L664.2 426.0" stroke="#8e8e8e" stroke-width="1.20" fill="none"/>
<path d="M641.2 435.5 L664.2 435.5" stroke="#8e8e8e" stroke-width="1.20" fill="none"/>
<path d="M641.2 444.5 L664.2 444.5" stroke="#8e8e8e" stroke-width="1.20" fill="none"/>
<path d="M150.5 412.0 A17.5 17.5 0 0 1 185.5 412.0 Z" fill="#e2e2e2"/>
<path d="M153.0 412.0 A15.0 15.0 0 0 1 183.0 412.0 Z" fill="#8a8a8a"/>
<path d="M155.5 412.0 A12.5 12.5 0 0 1 180.5 412.0 Z" fill="#2e2e2e"/>
<path d="M157.5 412.0 A10.5 10.5 0 0 1 178.5 412.0 Z" fill="#a98aa0"/>
<path d="M168.0 412.0 L168.0 401.5" stroke="#2e2e2e" stroke-width="1.10" fill="none"/>
<path d="M168.0 412.0 L176.0 404.5" stroke="#2e2e2e" stroke-width="1.00" fill="none"/>
<rect x="164.0" y="416.5" width="13.5" height="36.5" fill="#3d6a88"/>
<rect x="164.0" y="453.0" width="17.0" height="6.0" fill="#4e4e4e"/>
<path d="M164.0 426.0 L177.5 426.0" stroke="#9a9a9a" stroke-width="1.00" fill="none"/>
<path d="M164.0 435.0 L177.5 435.0" stroke="#9a9a9a" stroke-width="1.00" fill="none"/>
<path d="M164.0 444.0 L177.5 444.0" stroke="#9a9a9a" stroke-width="1.00" fill="none"/>
<rect x="177.5" y="416.5" width="3.5" height="36.5" fill="#ffffff"/>
<rect x="176.5" y="412.0" width="5.5" height="4.5" fill="#2a2a2a"/>
<rect x="188.4" y="383.0" width="5.2" height="80.5" fill="#ffffff" stroke="#777" stroke-width="0.4"/>
<rect x="187.0" y="381.0" width="8.0" height="4.0" fill="#2e2e2e"/>
<rect x="164.0" y="338.5" width="29.0" height="2.0" fill="#1e1e1e"/>
<rect x="164.0" y="355.5" width="24.0" height="22.5" fill="#7a7a7a"/>
<rect x="164.0" y="358.0" width="24.0" height="2.5" fill="#2a2a2a"/>
<rect x="164.0" y="364.0" width="24.0" height="3.0" fill="#c8c8c8"/>
<rect x="164.0" y="371.5" width="24.0" height="5.0" fill="#3c3c3c"/>
<rect x="164.0" y="378.0" width="29.0" height="4.5" fill="#f2f2f2"/>
<path d="M164.0 380.0 L193.0 380.0" stroke="#888" stroke-width="0.50" fill="none"/>
<rect x="694.0" y="377.0" width="321.0" height="6.0" fill="#f4f4f4"/>
<path d="M694.0 379.3 L1015.0 379.3" stroke="#777" stroke-width="0.50" fill="none"/>
<path d="M694.0 381.3 L1015.0 381.3" stroke="#999" stroke-width="0.50" fill="none"/>
<path d="M694.0 377.3 L1015.0 377.3" stroke="#222" stroke-width="0.80" fill="none"/>
<path d="M703.0 358.5 L1015.0 358.5" stroke="#e6e6e6" stroke-width="1.20" fill="none"/>
<path d="M703.0 338.8 L1015.0 338.8" stroke="#2a2a2a" stroke-width="1.00" fill="none"/>
<rect x="700.0" y="388.0" width="2.2" height="70.0" fill="#ffffff"/>
<rect x="703.0" y="340.0" width="3.0" height="18.0" fill="#ffffff" stroke="#444" stroke-width="0.4"/>
<rect x="749.0" y="388.0" width="1.3" height="74.0" fill="#ffffff"/>
<rect x="747.0" y="462.0" width="14.5" height="12.0" fill="#ffffff" stroke="#888" stroke-width="0.3"/>
<rect x="804.0" y="388.0" width="1.3" height="74.0" fill="#ffffff"/>
<rect x="802.0" y="462.0" width="14.5" height="12.0" fill="#ffffff" stroke="#888" stroke-width="0.3"/>
<rect x="858.0" y="388.0" width="1.3" height="74.0" fill="#ffffff"/>
<rect x="856.0" y="462.0" width="14.5" height="12.0" fill="#ffffff" stroke="#888" stroke-width="0.3"/>
<rect x="912.0" y="388.0" width="1.3" height="74.0" fill="#ffffff"/>
<rect x="910.0" y="462.0" width="14.5" height="12.0" fill="#ffffff" stroke="#888" stroke-width="0.3"/>
<rect x="966.0" y="388.0" width="1.3" height="74.0" fill="#ffffff"/>
<rect x="964.0" y="462.0" width="14.5" height="12.0" fill="#ffffff" stroke="#888" stroke-width="0.3"/>
<rect x="700.0" y="462.0" width="6.0" height="12.0" fill="#fff"/>
<path d="M717.5 412.5 A10.5 10.5 0 0 1 738.5 412.5 Z" fill="#9a9a9a"/>
<ellipse cx="733.6" cy="409.9" rx="3.4" ry="1.5" fill="#d0a6bc" transform="rotate(-25 733.6 409.9)"/>
<ellipse cx="731.4" cy="407.3" rx="3.4" ry="1.5" fill="#d0a6bc" transform="rotate(-57 731.4 407.3)"/>
<ellipse cx="728.0" cy="406.3" rx="3.4" ry="1.5" fill="#d0a6bc" transform="rotate(-90 728.0 406.3)"/>
<ellipse cx="724.6" cy="407.3" rx="3.4" ry="1.5" fill="#d0a6bc" transform="rotate(-123 724.6 407.3)"/>
<ellipse cx="722.4" cy="409.9" rx="3.4" ry="1.5" fill="#d0a6bc" transform="rotate(-155 722.4 409.9)"/>
<path d="M725.8 412.5 A2.2 2.2 0 0 1 730.2 412.5 Z" fill="#777"/>
<rect x="710.5" y="411.5" width="35.0" height="3.0" fill="#3c3c3c"/>
<rect x="716.0" y="415.0" width="24.0" height="39.0" fill="#8c8c8c"/>
<rect x="717.2" y="417.0" width="21.6" height="36.0" fill="#c6a2b8"/>
<rect x="727.0" y="417.0" width="2.0" height="36.0" fill="#a0a0a0"/>
<path d="M717.2 426.0 L738.8 426.0" stroke="#a0a0a0" stroke-width="1.30" fill="none"/>
<path d="M717.2 435.5 L738.8 435.5" stroke="#a0a0a0" stroke-width="1.30" fill="none"/>
<path d="M717.2 444.5 L738.8 444.5" stroke="#a0a0a0" stroke-width="1.30" fill="none"/>
<rect x="740.0" y="418.0" width="1.6" height="34.0" fill="#f4f4f4"/>
<circle cx="728.0" cy="485" r="3.8" fill="#f0f0f0" stroke="#777" stroke-width="0.5"/><circle cx="728.0" cy="485" r="1.6" fill="#aaa"/>
<path d="M772.5 412.5 A10.5 10.5 0 0 1 793.5 412.5 Z" fill="#9a9a9a"/>
<ellipse cx="788.6" cy="409.9" rx="3.4" ry="1.5" fill="#d0a6bc" transform="rotate(-25 788.6 409.9)"/>
<ellipse cx="786.4" cy="407.3" rx="3.4" ry="1.5" fill="#d0a6bc" transform="rotate(-57 786.4 407.3)"/>
<ellipse cx="783.0" cy="406.3" rx="3.4" ry="1.5" fill="#d0a6bc" transform="rotate(-90 783.0 406.3)"/>
<ellipse cx="779.6" cy="407.3" rx="3.4" ry="1.5" fill="#d0a6bc" transform="rotate(-123 779.6 407.3)"/>
<ellipse cx="777.4" cy="409.9" rx="3.4" ry="1.5" fill="#d0a6bc" transform="rotate(-155 777.4 409.9)"/>
<path d="M780.8 412.5 A2.2 2.2 0 0 1 785.2 412.5 Z" fill="#777"/>
<rect x="765.5" y="411.5" width="35.0" height="3.0" fill="#3c3c3c"/>
<rect x="771.0" y="415.0" width="24.0" height="39.0" fill="#8c8c8c"/>
<rect x="772.2" y="417.0" width="21.6" height="36.0" fill="#c6a2b8"/>
<rect x="772.2" y="417.0" width="10.3" height="36.0" fill="#3d6a88"/>
<rect x="782.0" y="417.0" width="2.0" height="36.0" fill="#a0a0a0"/>
<path d="M772.2 426.0 L793.8 426.0" stroke="#a0a0a0" stroke-width="1.30" fill="none"/>
<path d="M772.2 435.5 L793.8 435.5" stroke="#a0a0a0" stroke-width="1.30" fill="none"/>
<path d="M772.2 444.5 L793.8 444.5" stroke="#a0a0a0" stroke-width="1.30" fill="none"/>
<rect x="795.0" y="418.0" width="1.6" height="34.0" fill="#f4f4f4"/>
<circle cx="783.0" cy="485" r="3.8" fill="#f0f0f0" stroke="#777" stroke-width="0.5"/><circle cx="783.0" cy="485" r="1.6" fill="#aaa"/>
<path d="M826.5 412.5 A10.5 10.5 0 0 1 847.5 412.5 Z" fill="#9a9a9a"/>
<ellipse cx="842.6" cy="409.9" rx="3.4" ry="1.5" fill="#d0a6bc" transform="rotate(-25 842.6 409.9)"/>
<ellipse cx="840.4" cy="407.3" rx="3.4" ry="1.5" fill="#d0a6bc" transform="rotate(-57 840.4 407.3)"/>
<ellipse cx="837.0" cy="406.3" rx="3.4" ry="1.5" fill="#d0a6bc" transform="rotate(-90 837.0 406.3)"/>
<ellipse cx="833.6" cy="407.3" rx="3.4" ry="1.5" fill="#d0a6bc" transform="rotate(-123 833.6 407.3)"/>
<ellipse cx="831.4" cy="409.9" rx="3.4" ry="1.5" fill="#d0a6bc" transform="rotate(-155 831.4 409.9)"/>
<path d="M834.8 412.5 A2.2 2.2 0 0 1 839.2 412.5 Z" fill="#777"/>
<rect x="819.5" y="411.5" width="35.0" height="3.0" fill="#3c3c3c"/>
<rect x="825.0" y="415.0" width="24.0" height="39.0" fill="#8c8c8c"/>
<rect x="826.2" y="417.0" width="21.6" height="36.0" fill="#c6a2b8"/>
<rect x="826.2" y="417.0" width="10.3" height="36.0" fill="#3d6a88"/>
<rect x="836.0" y="417.0" width="2.0" height="36.0" fill="#a0a0a0"/>
<path d="M826.2 426.0 L847.8 426.0" stroke="#a0a0a0" stroke-width="1.30" fill="none"/>
<path d="M826.2 435.5 L847.8 435.5" stroke="#a0a0a0" stroke-width="1.30" fill="none"/>
<path d="M826.2 444.5 L847.8 444.5" stroke="#a0a0a0" stroke-width="1.30" fill="none"/>
<circle cx="837.0" cy="485" r="3.8" fill="#f0f0f0" stroke="#777" stroke-width="0.5"/><circle cx="837.0" cy="485" r="1.6" fill="#aaa"/>
<path d="M881.2 412.5 A10.5 10.5 0 0 1 902.2 412.5 Z" fill="#b4b4b4"/>
<ellipse cx="897.3" cy="409.9" rx="3.4" ry="1.5" fill="#6f8fae" transform="rotate(-25 897.3 409.9)"/>
<ellipse cx="895.1" cy="407.3" rx="3.4" ry="1.5" fill="#6f8fae" transform="rotate(-57 895.1 407.3)"/>
<ellipse cx="891.7" cy="406.3" rx="3.4" ry="1.5" fill="#d0a6bc" transform="rotate(-90 891.7 406.3)"/>
<ellipse cx="888.3" cy="407.3" rx="3.4" ry="1.5" fill="#d0a6bc" transform="rotate(-123 888.3 407.3)"/>
<ellipse cx="886.1" cy="409.9" rx="3.4" ry="1.5" fill="#d0a6bc" transform="rotate(-155 886.1 409.9)"/>
<path d="M889.5 412.5 A2.2 2.2 0 0 1 893.9 412.5 Z" fill="#777"/>
<rect x="874.2" y="411.5" width="35.0" height="3.0" fill="#6a6a6a"/>
<rect x="879.7" y="415.0" width="24.0" height="39.0" fill="#a4a4a4"/>
<rect x="880.9" y="417.0" width="21.6" height="36.0" fill="#3d6a88"/>
<rect x="896.7" y="419.0" width="5.8" height="31.0" fill="#c6a2b8"/>
<rect x="890.7" y="417.0" width="2.0" height="36.0" fill="#a0a0a0"/>
<path d="M880.9 426.0 L902.5 426.0" stroke="#a0a0a0" stroke-width="1.30" fill="none"/>
<path d="M880.9 435.5 L902.5 435.5" stroke="#a0a0a0" stroke-width="1.30" fill="none"/>
<path d="M880.9 444.5 L902.5 444.5" stroke="#a0a0a0" stroke-width="1.30" fill="none"/>
<rect x="903.7" y="418.0" width="1.6" height="34.0" fill="#f4f4f4"/>
<circle cx="891.7" cy="485" r="3.8" fill="#f0f0f0" stroke="#777" stroke-width="0.5"/><circle cx="891.7" cy="485" r="1.6" fill="#aaa"/>
<path d="M935.0 412.5 A10.5 10.5 0 0 1 956.0 412.5 Z" fill="#b4b4b4"/>
<ellipse cx="951.1" cy="409.9" rx="3.4" ry="1.5" fill="#6f8fae" transform="rotate(-25 951.1 409.9)"/>
<ellipse cx="948.9" cy="407.3" rx="3.4" ry="1.5" fill="#6f8fae" transform="rotate(-57 948.9 407.3)"/>
<ellipse cx="945.5" cy="406.3" rx="3.4" ry="1.5" fill="#d0a6bc" transform="rotate(-90 945.5 406.3)"/>
<ellipse cx="942.1" cy="407.3" rx="3.4" ry="1.5" fill="#d0a6bc" transform="rotate(-123 942.1 407.3)"/>
<ellipse cx="939.9" cy="409.9" rx="3.4" ry="1.5" fill="#d0a6bc" transform="rotate(-155 939.9 409.9)"/>
<path d="M943.3 412.5 A2.2 2.2 0 0 1 947.7 412.5 Z" fill="#777"/>
<rect x="928.0" y="411.5" width="35.0" height="3.0" fill="#6a6a6a"/>
<rect x="933.5" y="415.0" width="24.0" height="39.0" fill="#a4a4a4"/>
<rect x="934.7" y="417.0" width="21.6" height="36.0" fill="#3d6a88"/>
<rect x="944.5" y="417.0" width="2.0" height="36.0" fill="#a0a0a0"/>
<path d="M934.7 426.0 L956.3 426.0" stroke="#a0a0a0" stroke-width="1.30" fill="none"/>
<path d="M934.7 435.5 L956.3 435.5" stroke="#a0a0a0" stroke-width="1.30" fill="none"/>
<path d="M934.7 444.5 L956.3 444.5" stroke="#a0a0a0" stroke-width="1.30" fill="none"/>
<rect x="957.5" y="418.0" width="1.6" height="34.0" fill="#f4f4f4"/>
<circle cx="945.5" cy="485" r="3.8" fill="#f0f0f0" stroke="#777" stroke-width="0.5"/><circle cx="945.5" cy="485" r="1.6" fill="#aaa"/>
<path d="M989.8 412.5 A10.5 10.5 0 0 1 1010.8 412.5 Z" fill="#b4b4b4"/>
<ellipse cx="1005.9" cy="409.9" rx="3.4" ry="1.5" fill="#6f8fae" transform="rotate(-25 1005.9 409.9)"/>
<ellipse cx="1003.7" cy="407.3" rx="3.4" ry="1.5" fill="#6f8fae" transform="rotate(-57 1003.7 407.3)"/>
<ellipse cx="1000.3" cy="406.3" rx="3.4" ry="1.5" fill="#d0a6bc" transform="rotate(-90 1000.3 406.3)"/>
<ellipse cx="996.9" cy="407.3" rx="3.4" ry="1.5" fill="#d0a6bc" transform="rotate(-123 996.9 407.3)"/>
<ellipse cx="994.7" cy="409.9" rx="3.4" ry="1.5" fill="#d0a6bc" transform="rotate(-155 994.7 409.9)"/>
<path d="M998.1 412.5 A2.2 2.2 0 0 1 1002.5 412.5 Z" fill="#777"/>
<rect x="982.8" y="411.5" width="35.0" height="3.0" fill="#6a6a6a"/>
<rect x="988.3" y="415.0" width="24.0" height="39.0" fill="#a4a4a4"/>
<rect x="989.5" y="417.0" width="21.6" height="36.0" fill="#3d6a88"/>
<rect x="991.3" y="445.0" width="19.0" height="8.0" fill="#c6a2b8"/>
<rect x="1002.3" y="436.0" width="8.0" height="8.0" fill="#c6a2b8"/>
<rect x="999.3" y="417.0" width="2.0" height="36.0" fill="#a0a0a0"/>
<path d="M989.5 426.0 L1011.1 426.0" stroke="#a0a0a0" stroke-width="1.30" fill="none"/>
<path d="M989.5 435.5 L1011.1 435.5" stroke="#a0a0a0" stroke-width="1.30" fill="none"/>
<path d="M989.5 444.5 L1011.1 444.5" stroke="#a0a0a0" stroke-width="1.30" fill="none"/>
<rect x="1012.3" y="418.0" width="1.6" height="34.0" fill="#f4f4f4"/>
<circle cx="1000.3" cy="485" r="3.8" fill="#f0f0f0" stroke="#777" stroke-width="0.5"/><circle cx="1000.3" cy="485" r="1.6" fill="#aaa"/>
<rect x="1009.5" y="416.0" width="5.5" height="37.0" fill="#ffffff"/>
<path d="M735 481 L741 481 L743 492 L741 493 L741 505 L736 505 L736 493 L734 492 Z" fill="#7a7a7a"/><circle cx="738" cy="478" r="2" fill="#777"/>
<rect x="742.5" y="492.0" width="2.5" height="13.0" fill="#161616"/>
<path d="M997 478 L1003 478 L1004 492 L1002 504 L998 504 L997 492 Z" fill="#8a8a8a"/>
<rect x="1004.0" y="494.0" width="4.0" height="10.0" fill="#222"/>
<rect x="597.5" y="453.0" width="7.5" height="15.0" fill="#161616"/>
<circle cx="601" cy="451" r="2.3" fill="#161616"/>
<rect x="562.5" y="420.0" width="3.3" height="32.0" fill="#f7a5a1" opacity="0.7"/>
<rect x="598.3" y="418.0" width="2.7" height="44.0" fill="#f7a5a1" opacity="0.7"/>
<rect x="609.5" y="392.0" width="3.0" height="70.0" fill="#f7a5a1" opacity="0.7"/>
<rect x="633.0" y="418.0" width="2.8" height="34.0" fill="#f7a5a1" opacity="0.7"/>
<rect x="668.3" y="420.0" width="3.2" height="45.0" fill="#f7a5a1" opacity="0.7"/>
<rect x="676.0" y="440.0" width="5.0" height="24.0" fill="#f7a5a1" opacity="0.7"/>
<rect x="626.0" y="395.0" width="3.0" height="20.0" fill="#f7a5a1" opacity="0.7"/>
<rect x="222.5" y="425.0" width="2.5" height="35.0" fill="#f7a5a1" opacity="0.7"/>
<rect x="260.0" y="430.0" width="2.0" height="25.0" fill="#f7a5a1" opacity="0.7"/>
<rect x="284.0" y="405.0" width="2.5" height="55.0" fill="#f7a5a1" opacity="0.7"/>
<rect x="293.8" y="418.0" width="3.7" height="32.0" fill="#f7a5a1" opacity="0.7"/>
<rect x="607.0" y="463.0" width="6.0" height="10.0" fill="#f0f0f0"/>
<rect x="668.0" y="463.0" width="6.0" height="10.0" fill="#f0f0f0"/>
<rect x="676.0" y="463.0" width="6.0" height="10.0" fill="#f4f4f4"/>
<path d="M164.0 512.0 L178.0 512.0" stroke="#111" stroke-width="1.60" fill="none"/>
<path d="M188.0 507.0 L188.0 528.0" stroke="#222" stroke-width="0.80" fill="none"/>
<path d="M705.0 506.5 L705.0 524.0" stroke="#111" stroke-width="0.80" fill="none"/>
<path d="M706.0 512.5 H1015.0" stroke="#111" stroke-width="0.7" stroke-dasharray="25 3 14 3"/>
<path d="M710.0 519.0 H790.0" stroke="#111" stroke-width="1.0" stroke-dasharray="22 1 10 2"/>
<path d="M720.0 523.0 H760.0" stroke="#111" stroke-width="1.4" stroke-dasharray="7 2 4 3"/>
<path d="M725.0 526.0 H800.0" stroke="#111" stroke-width="1.2" stroke-dasharray="21 2 9 5"/>
<path d="M805.0 524.0 H830.0" stroke="#111" stroke-width="1.2" stroke-dasharray="9 2 3 2"/>
<path d="M845.0 529.0 H975.0" stroke="#111" stroke-width="2.4" stroke-dasharray="19 3 5 4"/>
<path d="M850.0 527.0 H960.0" stroke="#111" stroke-width="1.2" stroke-dasharray="11 1 5 5"/>
<path d="M770.0 529.0 H820.0" stroke="#111" stroke-width="1.0" stroke-dasharray="25 4 5 2"/>
<path d="M880.0 512.0 H1000.0" stroke="#111" stroke-width="1.4" stroke-dasharray="6 1 6 2"/>
<path d="M940.0 515.0 H1010.0" stroke="#111" stroke-width="0.8" stroke-dasharray="11 2 7 3"/>
<path d="M982.0 526.0 H1013.0" stroke="#111" stroke-width="1.2" stroke-dasharray="12 2 5 2"/>
<path d="M996.0 521.0 H1006.0" stroke="#111" stroke-width="1.0" stroke-dasharray="18 3 3 3"/>
<path d="M835.0 522.0 H842.0" stroke="#111" stroke-width="1.6" stroke-dasharray="19 2 5 3"/>
<path d="M888.0 521.0 H893.0" stroke="#111" stroke-width="1.6" stroke-dasharray="8 3 7 5"/>
<rect x="361.2" y="519.9" width="2.5" height="1.0" fill="#111"/>
<rect x="353.9" y="515.1" width="1.5" height="1.0" fill="#111"/>
<rect x="362.7" y="511.7" width="1.5" height="1.6" fill="#111"/>
<rect x="355.5" y="513.1" width="1.0" height="1.6" fill="#111"/>
<rect x="358.0" y="516.1" width="2.5" height="1.0" fill="#111"/>
<rect x="358.1" y="519.6" width="1.0" height="1.0" fill="#111"/>
<rect x="353.7" y="511.6" width="1.0" height="0.8" fill="#111"/>
<rect x="363.6" y="526.6" width="1.5" height="1.0" fill="#111"/>
<rect x="360.2" y="525.9" width="1.5" height="1.0" fill="#111"/>
<rect x="354.5" y="523.0" width="1.5" height="1.0" fill="#111"/>
<rect x="353.5" y="526.9" width="1.0" height="0.8" fill="#111"/>
<rect x="357.8" y="520.2" width="1.0" height="1.0" fill="#111"/>
<rect x="356.9" y="522.1" width="1.0" height="1.0" fill="#111"/>
<rect x="362.6" y="514.1" width="1.0" height="1.6" fill="#111"/>
<rect x="355.1" y="521.8" width="1.5" height="0.8" fill="#111"/>
<rect x="363.1" y="509.6" width="2.5" height="1.6" fill="#111"/>
<rect x="365.9" y="508.6" width="2.5" height="1.6" fill="#111"/>
<rect x="357.8" y="513.0" width="2.5" height="1.0" fill="#111"/>
<rect x="355.0" y="527.6" width="2.5" height="0.8" fill="#111"/>
<rect x="364.2" y="514.7" width="1.0" height="0.8" fill="#111"/>
<rect x="366.7" y="519.3" width="1.0" height="1.6" fill="#111"/>
<rect x="365.6" y="516.3" width="1.0" height="1.0" fill="#111"/>
<rect x="358.2" y="509.2" width="1.5" height="1.0" fill="#111"/>
<rect x="355.0" y="526.4" width="2.5" height="0.8" fill="#111"/>
<rect x="476.5" y="517.4" width="1.5" height="1.6" fill="#111"/>
<rect x="460.7" y="518.0" width="1.5" height="1.0" fill="#111"/>
<rect x="439.8" y="510.4" width="1.5" height="1.6" fill="#111"/>
<rect x="475.4" y="521.4" width="1.5" height="1.0" fill="#111"/>
<rect x="425.5" y="518.3" width="2.5" height="1.6" fill="#111"/>
<rect x="469.5" y="515.3" width="1.5" height="1.6" fill="#111"/>
<rect x="451.6" y="507.8" width="1.5" height="1.0" fill="#111"/>
<rect x="449.8" y="522.4" width="1.5" height="1.0" fill="#111"/>
<rect x="463.3" y="522.9" width="1.5" height="1.0" fill="#111"/>
<rect x="455.6" y="520.4" width="1.0" height="1.0" fill="#111"/>
<rect x="449.0" y="512.8" width="2.5" height="1.0" fill="#111"/>
<rect x="443.6" y="525.8" width="2.5" height="1.6" fill="#111"/>
<rect x="465.0" y="515.0" width="2.5" height="1.0" fill="#111"/>
<rect x="461.2" y="526.0" width="1.5" height="0.8" fill="#111"/>
<rect x="469.7" y="522.8" width="1.5" height="1.0" fill="#111"/>
<rect x="447.2" y="519.2" width="1.0" height="0.8" fill="#111"/>
<rect x="467.5" y="528.6" width="1.5" height="1.0" fill="#111"/>
<rect x="458.3" y="523.6" width="2.5" height="1.0" fill="#111"/>
<rect x="425.0" y="524.9" width="2.5" height="1.6" fill="#111"/>
<rect x="456.6" y="516.7" width="2.5" height="1.6" fill="#111"/>
<rect x="463.6" y="521.6" width="2.5" height="0.8" fill="#111"/>
<rect x="426.5" y="520.5" width="2.5" height="1.6" fill="#111"/>
<rect x="425.6" y="524.5" width="1.0" height="1.6" fill="#111"/>
<rect x="460.0" y="529.7" width="1.0" height="0.8" fill="#111"/>
<rect x="417.5" y="510.1" width="1.5" height="0.8" fill="#111"/>
<rect x="444.9" y="519.6" width="1.5" height="1.0" fill="#111"/>
<rect x="436.5" y="522.2" width="1.0" height="1.6" fill="#111"/>
<rect x="427.1" y="523.5" width="1.5" height="0.8" fill="#111"/>
<rect x="436.4" y="528.9" width="1.5" height="0.8" fill="#111"/>
<rect x="458.1" y="519.6" width="1.0" height="1.6" fill="#111"/>
<rect x="453.3" y="509.2" width="2.5" height="1.6" fill="#111"/>
<rect x="435.7" y="520.4" width="1.5" height="0.8" fill="#111"/>
<rect x="440.8" y="525.7" width="2.5" height="1.6" fill="#111"/>
<rect x="437.6" y="510.3" width="2.5" height="1.0" fill="#111"/>
<rect x="450.1" y="529.0" width="1.0" height="1.6" fill="#111"/>
<rect x="419.8" y="525.9" width="2.5" height="0.8" fill="#111"/>
<rect x="438.4" y="514.5" width="2.5" height="1.6" fill="#111"/>
<rect x="423.0" y="521.5" width="2.5" height="1.0" fill="#111"/>
<rect x="441.5" y="529.5" width="1.5" height="1.0" fill="#111"/>
<rect x="444.7" y="523.3" width="1.5" height="0.8" fill="#111"/>
<rect x="452.1" y="513.0" width="1.5" height="1.0" fill="#111"/>
<rect x="430.1" y="507.5" width="1.5" height="1.0" fill="#111"/>
<rect x="473.5" y="510.3" width="1.0" height="0.8" fill="#111"/>
<rect x="456.2" y="529.1" width="1.0" height="1.0" fill="#111"/>
<rect x="416.6" y="510.1" width="1.5" height="0.8" fill="#111"/>
<rect x="444.7" y="519.9" width="1.0" height="1.0" fill="#111"/>
<rect x="464.0" y="512.7" width="1.5" height="0.8" fill="#111"/>
<rect x="460.2" y="513.6" width="1.5" height="1.6" fill="#111"/>
<rect x="477.5" y="518.9" width="2.5" height="1.6" fill="#111"/>
<rect x="471.3" y="507.4" width="1.0" height="1.0" fill="#111"/>
<rect x="432.1" y="523.3" width="2.5" height="1.0" fill="#111"/>
<rect x="460.8" y="507.6" width="1.5" height="1.0" fill="#111"/>
<rect x="457.6" y="525.7" width="1.0" height="0.8" fill="#111"/>
<rect x="414.2" y="519.7" width="2.5" height="0.8" fill="#111"/>
<rect x="470.8" y="519.5" width="1.0" height="1.0" fill="#111"/>
<rect x="463.8" y="516.8" width="2.5" height="1.6" fill="#111"/>
<rect x="459.3" y="521.5" width="1.5" height="1.0" fill="#111"/>
<rect x="444.4" y="522.7" width="2.5" height="0.8" fill="#111"/>
<rect x="471.5" y="517.7" width="1.0" height="1.0" fill="#111"/>
<rect x="467.5" y="523.0" width="1.5" height="1.6" fill="#111"/>
<rect x="448.6" y="519.4" width="1.5" height="0.8" fill="#111"/>
<rect x="445.0" y="518.3" width="1.5" height="1.0" fill="#111"/>
<rect x="456.1" y="515.1" width="2.5" height="0.8" fill="#111"/>
<rect x="442.1" y="512.8" width="1.0" height="0.8" fill="#111"/>
<rect x="459.9" y="510.3" width="2.5" height="1.0" fill="#111"/>
<rect x="469.4" y="522.0" width="2.5" height="1.0" fill="#111"/>
<rect x="441.5" y="520.1" width="1.0" height="1.6" fill="#111"/>
<rect x="459.4" y="521.4" width="2.5" height="0.8" fill="#111"/>
<rect x="469.8" y="518.5" width="1.5" height="0.8" fill="#111"/>
<rect x="445.5" y="512.2" width="1.0" height="0.8" fill="#111"/>
<rect x="458.7" y="510.5" width="1.0" height="1.6" fill="#111"/>
<rect x="451.4" y="510.9" width="1.0" height="1.6" fill="#111"/>
<rect x="457.3" y="518.9" width="2.5" height="0.8" fill="#111"/>
<rect x="440.3" y="511.1" width="2.5" height="1.6" fill="#111"/>
<rect x="454.7" y="514.2" width="2.5" height="1.0" fill="#111"/>
<rect x="467.4" y="511.7" width="1.5" height="0.8" fill="#111"/>
<rect x="457.1" y="518.1" width="1.5" height="1.6" fill="#111"/>
<rect x="456.5" y="512.6" width="1.0" height="1.6" fill="#111"/>
<rect x="447.1" y="520.0" width="1.5" height="1.6" fill="#111"/>
<rect x="469.3" y="519.7" width="1.5" height="1.0" fill="#111"/>
<rect x="462.1" y="512.2" width="2.5" height="0.8" fill="#111"/>
<rect x="459.7" y="511.0" width="2.5" height="0.8" fill="#111"/>
<rect x="442.7" y="511.5" width="2.5" height="1.0" fill="#111"/>
<rect x="447.2" y="520.5" width="1.5" height="1.0" fill="#111"/>
<rect x="443.2" y="516.4" width="2.5" height="1.6" fill="#111"/>
<rect x="488.6" y="523.9" width="1.5" height="1.6" fill="#111"/>
<rect x="493.5" y="522.5" width="1.0" height="1.6" fill="#111"/>
<rect x="489.9" y="515.0" width="2.5" height="1.6" fill="#111"/>
<rect x="488.5" y="523.7" width="1.5" height="1.0" fill="#111"/>
<rect x="495.2" y="521.9" width="1.5" height="1.0" fill="#111"/>
<rect x="485.6" y="523.6" width="2.5" height="1.0" fill="#111"/>
<rect x="304.8" y="509.7" width="1.5" height="1.6" fill="#111"/>
<rect x="300.2" y="512.0" width="1.0" height="1.6" fill="#111"/>
<rect x="301.1" y="508.3" width="1.0" height="0.8" fill="#111"/>
<rect x="444.2" y="507.0" width="1.5" height="1.0" fill="#111"/>
<rect x="506.0" y="507.7" width="1.5" height="1.0" fill="#111"/>
<rect x="459.1" y="510.7" width="1.5" height="1.0" fill="#111"/>
<rect x="480.5" y="506.5" width="1.0" height="1.6" fill="#111"/>
<rect x="440.7" y="507.9" width="1.5" height="1.0" fill="#111"/>
<rect x="439.8" y="507.3" width="1.5" height="0.8" fill="#111"/>
<rect x="517.5" y="509.4" width="1.0" height="1.0" fill="#111"/>
<rect x="536.5" y="507.7" width="1.5" height="1.0" fill="#111"/>
<rect x="541.9" y="509.4" width="2.5" height="1.0" fill="#111"/>
<rect x="481.3" y="510.7" width="1.0" height="1.6" fill="#111"/>
<rect x="462.2" y="508.3" width="1.0" height="1.6" fill="#111"/>
<rect x="549.2" y="506.2" width="2.5" height="0.8" fill="#111"/>
<rect x="494.7" y="509.3" width="2.5" height="1.0" fill="#111"/>
<rect x="538.5" y="509.5" width="2.5" height="1.0" fill="#111"/>
<rect x="444.0" y="507.8" width="1.0" height="1.6" fill="#111"/>
<rect x="549.2" y="508.3" width="1.0" height="0.8" fill="#111"/>
<rect x="507.4" y="510.7" width="2.5" height="1.6" fill="#111"/>
<rect x="476.0" y="510.9" width="1.0" height="1.0" fill="#111"/>
<rect x="427.9" y="509.9" width="1.5" height="0.8" fill="#111"/>
<rect x="425.8" y="508.7" width="2.5" height="1.6" fill="#111"/>
<rect x="206.1" y="508.3" width="1.0" height="0.8" fill="#111"/>
<rect x="207.7" y="509.5" width="1.5" height="0.8" fill="#111"/>
</g>
</svg>
</div>
<div id="vcb" class="abs"></div>
<svg class="ico" style="left:926px;top:134px" width="82" height="40" viewBox="926 134 82 40"><ellipse cx="966.5" cy="167.2" rx="37" ry="2.4" fill="#ededed"/><ellipse cx="966.5" cy="167" rx="20" ry="1.6" fill="#dcdcdc"/><rect x="952.8" y="138" width="27.8" height="27.4" fill="#e6e6e6" stroke="#c2c2c2" stroke-width="0.8"/><rect x="957" y="143" width="19.5" height="17" fill="#dddddd"/><rect x="953.5" y="162.5" width="26.5" height="3" fill="#d2d2d2"/><text x="966.7" y="154.6" text-anchor="middle" font-family="Liberation Sans,sans-serif" font-size="6.2" font-weight="bold" fill="#6c727a" textLength="17" lengthAdjust="spacingAndGlyphs">FRONT</text></svg>
<svg class="ico" style="left:995px;top:194px" width="21" height="65" viewBox="995 194 21 65"><rect x="996.3" y="195.8" width="18.4" height="61.6" rx="2" fill="#f5f5f5" stroke="#a8a8a8" stroke-width="0.7"/><circle cx="1011.3" cy="199" r="1.3" fill="#ddd" stroke="#999" stroke-width="0.5"/><circle cx="1011.3" cy="254" r="1.3" fill="#ddd" stroke="#999" stroke-width="0.5"/><circle cx="1003.6" cy="211.6" r="4.4" fill="#ececec" stroke="#a0a0a0" stroke-width="0.8"/><circle cx="1003.6" cy="211.6" r="2.2" fill="#fafafa" stroke="#b4b4b4" stroke-width="0.6"/><rect x="1005.6" y="212.8" width="4.6" height="4.6" rx="0.8" fill="#5a9ae0" stroke="#3b78c4" stroke-width="0.5"/><path d="M1003.8 222 h2.4 l-1.2 1.5 Z" fill="#555"/><path d="M998.5 226.5 H1012.5" stroke="#c4c4c4" stroke-width="0.6"/><rect x="1000.8" y="230.6" width="5.4" height="5.4" fill="#8cc27a" stroke="#6aa55a" stroke-width="0.5"/><circle cx="1007" cy="236.6" r="1.5" fill="#f4f4f4" stroke="#777" stroke-width="0.6"/><path d="M1008 237.8 L1009.6 239.4" stroke="#777" stroke-width="0.7"/><path d="M1003.8 244.4 h2.4 l-1.2 1.5 Z" fill="#555"/></svg>
<div class="abs" style="left:1015px;top:103px;width:9px;height:428px;background:#f0f0f0;"></div>
<div class="abs" style="left:1016px;top:313px;width:7.5px;height:9px;background:#cdcdcd;"></div>
<svg class="ico" style="left:1016.5px;top:106px" width="6" height="5" viewBox="0 0 6 5"><path d="M0.7 3.6 L3 1.2 L5.3 3.6" fill="none" stroke="#444" stroke-width="0.8"/></svg>
<svg class="ico" style="left:1016.5px;top:524px" width="6" height="5" viewBox="0 0 6 5"><path d="M0.7 1.2 L3 3.6 L5.3 1.2" fill="none" stroke="#444" stroke-width="0.8"/></svg>
<svg class="ico" style="left:1006.5px;top:533.5px" width="5" height="6" viewBox="0 0 5 6"><path d="M1.2 0.7 L3.6 3 L1.2 5.3" fill="none" stroke="#444" stroke-width="0.8"/></svg>
<div class="abs" style="left:684px;top:532px;width:9.5px;height:7.5px;background:#cdcdcd;"></div>
<div class="t" style="left:178px;top:532.5px;color:#222;">1 : 100</div>
<svg class="ico" style="left:206.5px;top:531.8px" width="9" height="8.5" viewBox="0 0 9 8.5"><rect x="0.6" y="1" width="8" height="6.4" fill="#f4f4f4" stroke="#333" stroke-width="1"/><path d="M0.6 1 L4.6 4.4 L8.6 1 M0.6 7.4 L3.4 4 M8.6 7.4 L5.8 4" fill="none" stroke="#555" stroke-width="0.6"/></svg>
<svg class="ico" style="left:218.0px;top:531.8px" width="9" height="8.5" viewBox="0 0 9 8.5"><path d="M0.6 3.2 L3 1 H8.6 V5.6 L6.4 7.6 H0.6 Z" fill="#4a90e2" stroke="#2b6cb8" stroke-width="0.6"/><path d="M0.6 3.2 H6.4 V7.6 M6.4 3.2 L8.6 1" fill="none" stroke="#cfe3f8" stroke-width="0.5"/></svg>
<svg class="ico" style="left:229.5px;top:531.8px" width="9" height="8.5" viewBox="0 0 9 8.5"><circle cx="3.6" cy="3.6" r="2.4" fill="#f5b82a" stroke="#e09a10" stroke-width="0.6"/><path d="M5.4 4.6 L8.4 7.6 M8.4 4.6 L5.4 7.6" stroke="#d42a2a" stroke-width="1.1"/></svg>
<svg class="ico" style="left:241.0px;top:531.8px" width="9" height="8.5" viewBox="0 0 9 8.5"><circle cx="3.4" cy="3.4" r="2.2" fill="#dce9f7" stroke="#3b7cc4" stroke-width="0.8"/><path d="M2 7.6 H4.8" stroke="#3b7cc4" stroke-width="0.8"/><path d="M5.4 4.6 L8.4 7.6 M8.4 4.6 L5.4 7.6" stroke="#d42a2a" stroke-width="1.1"/></svg>
<svg class="ico" style="left:251.5px;top:531.8px" width="9" height="8.5" viewBox="0 0 9 8.5"><path d="M0.8 3.4 C2 0.8 6 0.8 7 3" fill="none" stroke="#666" stroke-width="0.8"/><path d="M0.6 1.6 L0.8 3.6 L2.8 3.2" fill="none" stroke="#666" stroke-width="0.7"/><circle cx="6" cy="5.4" r="1.9" fill="#e6f0fb" stroke="#3b7cc4" stroke-width="0.8"/></svg>
<svg class="ico" style="left:263.0px;top:531.8px" width="9" height="8.5" viewBox="0 0 9 8.5"><path d="M0.6 4 H4.4 M2.4 2 V6.4" stroke="#3b7cc4" stroke-width="1.3"/><rect x="3.6" y="1.6" width="3" height="3" fill="#6aa4e0"/><path d="M5.4 4.6 L8.4 7.6 M8.4 4.6 L5.4 7.6" stroke="#d42a2a" stroke-width="1.1"/></svg>
<svg class="ico" style="left:274.0px;top:531.8px" width="9" height="8.5" viewBox="0 0 9 8.5"><path d="M0.6 4 H4.4 M2.4 2 V6.4" stroke="#3b7cc4" stroke-width="1.3"/><rect x="4" y="2" width="3.6" height="4.4" fill="#8ab8ea" stroke="#3b7cc4" stroke-width="0.6"/><circle cx="6.6" cy="5" r="1.2" fill="#f4f4f4" stroke="#777" stroke-width="0.5"/></svg>
<svg class="ico" style="left:285.0px;top:531.8px" width="9" height="8.5" viewBox="0 0 9 8.5"><circle cx="4" cy="3.6" r="3" fill="#f0f0f0" stroke="#555" stroke-width="0.9"/><rect x="4.6" y="4.6" width="3.6" height="3" fill="#5a9a8a" stroke="#3a6a5a" stroke-width="0.5"/><path d="M2 3.4 H6" stroke="#777" stroke-width="0.6"/></svg>
<svg class="ico" style="left:296.0px;top:531.8px" width="9" height="8.5" viewBox="0 0 9 8.5"><path d="M0.6 2.6 C2 0.8 3.6 2 4.2 4 C4.8 6.4 6.8 6.8 8.2 4.4" fill="none" stroke="#666" stroke-width="0.9"/><circle cx="6.4" cy="3.4" r="1.6" fill="#f2f2f2" stroke="#777" stroke-width="0.7"/></svg>
<svg class="ico" style="left:308.0px;top:531.8px" width="9" height="8.5" viewBox="0 0 9 8.5"><path d="M4 1 C5.6 1 6 2.8 4 6.4 C2 2.8 2.4 1 4 1 Z" fill="#5a9ae6" stroke="#2b6cb8" stroke-width="0.5"/><circle cx="4" cy="2.8" r="0.8" fill="#fff"/></svg>
<svg class="ico" style="left:319.0px;top:531.8px" width="9" height="8.5" viewBox="0 0 9 8.5"><path d="M0.6 1.6 H5.6 L8 3.6 V7 H0.6 Z" fill="#f0f0f0" stroke="#444" stroke-width="0.9"/><path d="M3 3.2 L5.6 5.8 M5.6 3.2 L3 5.8" stroke="#444" stroke-width="0.8"/></svg>
<svg class="ico" style="left:329.5px;top:531.8px" width="9" height="8.5" viewBox="0 0 9 8.5"><path d="M0.6 7 V3.4 C0.6 1 4 1 4 3.4 V7" fill="#e8e8e8" stroke="#b03a3a" stroke-width="0.9"/><path d="M4.4 7 V3.8 C4.4 1.6 8 1.6 8 3.8 V7" fill="#d6e6f8" stroke="#3b7cc4" stroke-width="0.9"/><circle cx="6.2" cy="4" r="1" fill="#3b7cc4"/></svg>
<svg class="ico" style="left:341.0px;top:531.8px" width="9" height="8.5" viewBox="0 0 9 8.5"><path d="M0.8 3 L3 1.2 H7.8 V5.6 L5.6 7.4 H0.8 Z" fill="#dcdcdc" stroke="#666" stroke-width="0.7"/><path d="M0.8 3 H5.6 V7.4 M5.6 3 L7.8 1.2" fill="none" stroke="#777" stroke-width="0.5"/><rect x="2" y="4" width="2.4" height="2.4" fill="#999"/></svg>
<svg class="ico" style="left:352.0px;top:531.8px" width="9" height="8.5" viewBox="0 0 9 8.5"><path d="M0.6 0.8 V7.4 M0.6 2 H8.6 M8.6 0.8 V3.2" fill="none" stroke="#666" stroke-width="0.8"/><rect x="4.2" y="4" width="3.6" height="3" fill="#ddd" stroke="#666" stroke-width="0.7"/></svg>
<div class="abs" style="left:371px;top:532.5px;width:0.6px;height:7.5px;background:#bdbdbd;"></div>
<div class="t" style="left:365px;top:532px;color:#444;">&lt;</div>
<div id="status" class="abs"></div>
<div class="abs" style="left:0;top:554px;width:1024px;height:1px;background:#5a5a5a;"></div>
<div class="t" style="left:1.5px;top:544.5px;color:#111;letter-spacing:-0.19px;">Click to select, TAB for alternates, CTRL adds, SHIFT unselects.</div>
<div class="abs" style="left:495.5px;top:544px;width:108.5px;height:9px;background:#fff;"></div>
<svg class="ico" style="left:596.5px;top:547px" width="5" height="4" viewBox="0 0 5 4"><path d="M0.5 0.8 L2.5 2.8 L4.5 0.8" fill="none" stroke="#999" stroke-width="0.7"/></svg>
<svg class="ico" style="left:483px;top:543.5px" width="10" height="10" viewBox="0 0 10 10"><path d="M2 9 V5 L4 2 L5 5 V9 M5.5 9 V5.5 L7.5 4 L8.5 6 V9" fill="none" stroke="#8a8a8a" stroke-width="0.9"/></svg>
<svg class="ico" style="left:609px;top:543.5px" width="10" height="10" viewBox="0 0 10 10"><path d="M1 2 H8 L5.5 5 V8.5 L3.5 7.5 V5 Z" fill="#e0e0e0" stroke="#999" stroke-width="0.8"/></svg>
<div class="t" style="left:619.5px;top:545px;font-size:6px;color:#333;">:0</div>
<svg class="ico" style="left:637px;top:544px" width="10" height="9" viewBox="0 0 10 9"><rect x="0.6" y="0.6" width="8.4" height="7.6" fill="#f4f4f4" stroke="#3a4a5a" stroke-width="1"/><rect x="0.6" y="0.6" width="8.4" height="2" fill="#3a4a5a"/><rect x="2" y="4" width="2" height="3" fill="#3a4a5a"/><path d="M5 4.5 H8 M5 6.2 H8" stroke="#3a4a5a" stroke-width="0.7"/></svg>
<svg class="ico" style="left:651.5px;top:544px" width="9" height="9" viewBox="0 0 9 9"><rect x="2" y="0.6" width="6" height="6" fill="#bbb" stroke="#999" stroke-width="0.7"/><rect x="0.6" y="3" width="4" height="5" fill="#aaa" stroke="#888" stroke-width="0.7"/></svg>
<div class="abs" style="left:663px;top:543.5px;width:110px;height:9.5px;background:#fff;border:0.5px solid #bcbcbc;box-sizing:border-box;"></div>
<div class="t" style="left:665.5px;top:544.5px;color:#9a9a9a;">Main Model</div>
<svg class="ico" style="left:766px;top:547px" width="5" height="4" viewBox="0 0 5 4"><path d="M0.5 0.8 L2.5 2.8 L4.5 0.8" fill="none" stroke="#999" stroke-width="0.7"/></svg>
</body>
</html>
